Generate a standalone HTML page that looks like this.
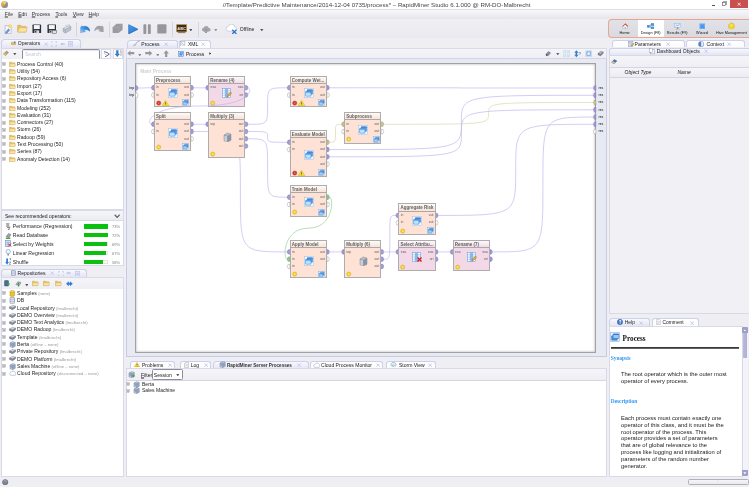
<!DOCTYPE html>
<html><head><meta charset="utf-8"><title>RapidMiner Studio</title>
<style>
*{box-sizing:border-box;margin:0;padding:0}
html,body{width:749px;height:487px;overflow:hidden;background:#eeeef3;font-family:"Liberation Sans",sans-serif;font-size:5.05px;color:#222;line-height:1}
.a{position:absolute}
.t{position:absolute;white-space:pre;line-height:1;filter:blur(0px)}
u{text-decoration-thickness:0.45px;text-underline-offset:0.35px}
.tab{position:absolute;border:0.6px solid #ccd0ea;border-bottom:none;border-radius:3px 3px 0 0;background:linear-gradient(#ffffff,#fbfbfe)}
.tab.sel{background:linear-gradient(#f8f8fd,#e4e5f2);border-radius:4px 3px 0 0}
.pane{position:absolute;border:0.6px solid #d9dae8;background:#fff}
.bar{position:absolute;background:linear-gradient(#f5f5f9,#eeeef4);border-bottom:0.5px solid #d0d0e0}
.row{position:absolute;left:0;height:7.3px;width:100%}
.plus{position:absolute;width:3.7px;height:3.7px;border:0.5px solid #b2b2ba;background:linear-gradient(#808088,#808088) center/2.1px 0.5px no-repeat,linear-gradient(#808088,#808088) center/0.5px 2.1px no-repeat,#fff}
.sm{font-size:4.2px;color:#9a9a9a}
.x{color:#b9c4e4;font-size:5px}
.op{position:absolute;filter:blur(0px);border:0.45px solid #adadad;width:37px;background:#fde2d5}
.op.pk{background:#f3d8e8}
.op .h{position:absolute;left:0;right:0;top:0;height:7.2px;background:linear-gradient(#fffaf6,#f6e2d8);border-bottom:0.5px solid #a9a9a9;font-weight:bold;font-size:4.45px;line-height:7px;padding-left:1.1px;white-space:pre;color:#606060;letter-spacing:0.04px}
.op.pk .h{background:linear-gradient(#fff8fc,#f0dbe8)}
.pl{position:absolute;font-size:3.35px;color:#5c5c5c;line-height:1}
#w{position:absolute;left:0;top:0;width:749px;height:487px;overflow:hidden;filter:blur(0.38px)}
</style></head><body><div id="w">

<div class="a" style="left:0;top:0;width:749px;height:9.2px;background:#fff"></div>
<svg class="a" style="left:0.8px;top:0.8px" width="7.4" height="7.4" viewBox="0 0 7 7"><circle cx="3.5" cy="3.5" r="3.3" fill="#8e9098"/><path d="M3.5 3.5L3.500.2A3.3 3.3 0 0 0 .9 5.6Z" fill="#f2a238"/><path d="M3.5 3.5L5.200.7A3.3 3.3 0 0 0 1.4 1Z" fill="#f8dc58"/><circle cx="3.5" cy="3.5" r="3.3" fill="none" stroke="#c8c8ce" stroke-width=".3"/></svg>
<div class="t" style="left:222.7px;top:5.3px;transform:translateY(-50%);font-size:6.17px;color:#444">//Template/Predictive Maintenance/2014-12-04 0735/process* – RapidMiner Studio 6.1.000 @ RM-DO-Malbrecht</div>
<div class="a" style="left:712px;top:4.5px;width:3.4px;height:1px;background:#555"></div>
<svg class="a" style="left:722px;top:1.4px" width="5" height="5" viewBox="0 0 5 5"><path d="M1.4 1.4V.4h3.2v3.2h-1" fill="none" stroke="#555" stroke-width=".6"/><rect x=".4" y="1.4" width="3.2" height="3.2" fill="#fff" stroke="#555" stroke-width=".6"/></svg>
<div class="a" style="left:730.2px;top:0;width:17.6px;height:7.6px;background:#c9504e"></div>
<svg class="a" style="left:736.8px;top:1.7px" width="4.4" height="4.4" viewBox="0 0 4.4 4.4"><path d="M.7 .7L3.7 3.7M3.7 .7L.7 3.7" stroke="#fff" stroke-width=".8"/></svg>
<div class="a" style="left:0;top:9px;width:749px;height:10.3px;background:linear-gradient(#f8f8fa,#e6e6eb);border-top:0.6px solid #dcdce2"></div>
<div class="t" style="left:4.8px;top:15.3px;transform:translateY(-50%);color:#333"><u>F</u>ile</div>
<div class="t" style="left:18.2px;top:15.3px;transform:translateY(-50%);color:#333"><u>E</u>dit</div>
<div class="t" style="left:31.8px;top:15.3px;transform:translateY(-50%);color:#333"><u>P</u>rocess</div>
<div class="t" style="left:55.4px;top:15.3px;transform:translateY(-50%);color:#333"><u>T</u>ools</div>
<div class="t" style="left:72.8px;top:15.3px;transform:translateY(-50%);color:#333"><u>V</u>iew</div>
<div class="t" style="left:88.6px;top:15.3px;transform:translateY(-50%);color:#333"><u>H</u>elp</div>
<div class="a" style="left:0;top:19.3px;width:749px;height:19px;background:linear-gradient(#efeff4,#e9e9ef)"></div>
<div class="a" style="left:75.6px;top:21.5px;width:0.6px;height:15px;background:#d6d6e2"></div>
<div class="a" style="left:109px;top:21.5px;width:0.6px;height:15px;background:#d6d6e2"></div>
<div class="a" style="left:172px;top:21.5px;width:0.6px;height:15px;background:#d6d6e2"></div>
<div class="a" style="left:197.5px;top:21.5px;width:0.6px;height:15px;background:#d6d6e2"></div>
<svg class="a" style="left:4.4px;top:23.6px" width="8.4" height="10.4" viewBox="0 0 8 9.6"><path d="M1 1.4h4.2l1.6 1.6v6H1z" fill="#f6f8fc" stroke="#9aa2b6" stroke-width=".5"/><path d="M1.6 7.4l2.6-3 1.4 1.2-2.6 3-1.700.4z" fill="#6a9ad8" stroke="#44699f" stroke-width=".3"/><circle cx="5.8" cy="2" r="1.7" fill="#f9cf45"/><circle cx="5.8" cy="2" r=".8" fill="#fdeea0"/></svg>
<svg class="a" style="left:17.2px;top:24.2px" width="10.8" height="9.2" viewBox="0 0 10 8.4"><path d="M.6 1.2h3l.8 1h4v5.2H.6z" fill="#e8c163" stroke="#c39a3e" stroke-width=".4"/><path d="M.6 7.4l1.6-4h7.4L8.2 7.4z" fill="#f9e3a0" stroke="#cfa84a" stroke-width=".4"/></svg>
<svg class="a" style="left:32px;top:24px" width="9.6" height="9.6" viewBox="0 0 8 8"><rect x=".4" y=".4" width="7.2" height="7.2" rx=".6" fill="#2c3038"/><rect x="1.5" y=".9" width="5" height="3.3" fill="#f4f6f9"/><rect x="2" y="5.3" width="4" height="2.3" fill="#d4d7de"/><rect x="2.6" y="5.7" width="1" height="1.5" fill="#2c3038"/></svg>
<svg class="a" style="left:46.7px;top:24px" width="9.6" height="9.6" viewBox="0 0 8 8"><rect x=".4" y=".4" width="7.2" height="7.2" rx=".6" fill="#2c3038"/><rect x="1.5" y=".9" width="5" height="3.3" fill="#f4f6f9"/><rect x="2" y="5.3" width="4" height="2.3" fill="#d4d7de"/><rect x="2.6" y="5.7" width="1" height="1.5" fill="#2c3038"/></svg>
<svg class="a" style="left:51.8px;top:29.8px" width="5" height="4.2" viewBox="0 0 5 4.2"><rect x=".3" y=".3" width="4.2" height="3.4" fill="#fff" stroke="#444" stroke-width=".5"/><path d="M1 1.4h2.8M1 2.4h2.8" stroke="#888" stroke-width=".3"/></svg>
<svg class="a" style="left:61.5px;top:23.8px" width="10" height="10" viewBox="0 0 9 9"><path d="M1 4l5-2.5 2 .8-5 2.6z" fill="#e6e9ef" stroke="#8a93a2" stroke-width=".4"/><path d="M1 4v3l2 1.2 5-2.8V2.3L3 4.9z" fill="#bcc3cf" stroke="#8a93a2" stroke-width=".4"/><path d="M3.2 1.6l3.2-1 .8.600-3.4 1.3z" fill="#fff" stroke="#8a93a2" stroke-width=".3"/><path d="M3 4.9V8.2" stroke="#8a93a2" stroke-width=".4"/></svg>
<svg class="a" style="left:79.7px;top:24.6px" width="10.6" height="8.2" viewBox="0 0 10 8"><defs><linearGradient id="ug" x1="0" y1="1" x2="1" y2="0"><stop offset="0" stop-color="#9fd0fa"/><stop offset=".6" stop-color="#2f86dc"/><stop offset="1" stop-color="#1f6cc4"/></linearGradient></defs><path d="M.4 2.4L.4 7.6L5.2 6.4L3.8 5.2C5.2 4.2 7.4 4.4 9.6 6.2C9.6 2.6 6 0 2.6 1.6L1.600.8Z" fill="url(#ug)" stroke="#2a70c0" stroke-width=".3"/></svg>
<svg class="a" style="left:94.3px;top:24.9px" width="10" height="7.6" viewBox="0 0 10 8"><path d="M9.6 2.4L9.6 7.6L4.8 6.4L6.2 5.2C4.8 4.2 2.6 4.400.4 6.2C.4 2.6 4 0 7.4 1.6L8.400.8Z" fill="#a2a2a6" stroke="#8e8e92" stroke-width=".3"/></svg>
<svg class="a" style="left:112.2px;top:22.8px" width="11.4" height="10.8" viewBox="0 0 11.4 10.8"><path d="M.6 4.2L4.600.8h6v6L6.6 10H.6z" fill="#9a9aa0"/><path d="M.6 4.2h6L10.600.8M6.6 4.2V10" stroke="#b0b0b6" stroke-width=".5" fill="none"/></svg>
<svg class="a" style="left:128.4px;top:23.5px" width="11" height="10.6" viewBox="0 0 11 10.6"><defs><linearGradient id="pg" x1="0" y1="0" x2="1" y2="1"><stop offset="0" stop-color="#4aa0ee"/><stop offset="1" stop-color="#1f6fd0"/></linearGradient></defs><path d="M.7.7L10 5.300.7 9.9z" fill="url(#pg)" stroke="#1d5fa8" stroke-width=".6" stroke-linejoin="round"/></svg>
<svg class="a" style="left:143px;top:23.7px" width="8.4" height="10.2" viewBox="0 0 8.4 10.2"><rect x=".4" y=".3" width="2.9" height="9.6" rx=".6" fill="#96969c"/><rect x="4.9" y=".3" width="2.9" height="9.6" rx=".6" fill="#96969c"/></svg>
<svg class="a" style="left:157px;top:24px" width="9.8" height="9.8" viewBox="0 0 9.8 9.8"><rect x=".3" y=".3" width="9.2" height="9.2" rx=".9" fill="#96969c"/></svg>
<svg class="a" style="left:175.8px;top:24.2px" width="11.4" height="9.6" viewBox="0 0 11.4 9.6"><rect x=".5" y=".5" width="10.2" height="7.4" rx=".5" fill="#3a2c22" stroke="#c89a3a" stroke-width=".8"/><text x="5.6" y="5.8" font-size="4" font-weight="bold" fill="#e8e0d0" text-anchor="middle" font-family="Liberation Sans,sans-serif">ABC</text><rect x="2" y="8.2" width="7.2" height=".9" fill="#8a6a3a"/></svg>
<svg class="a" style="left:188.6px;top:29.2px" width="3.6" height="2.2" viewBox="0 0 3.6 2.2"><path d="M.2.2h3.2L1.8 2z" fill="#222"/></svg>
<svg class="a" style="left:200.5px;top:24.6px" width="10" height="8.4" viewBox="0 0 10 8.4"><path d="M2.4 6.6a2 2 0 0 1 .2-3.9A2.8 2.8 0 0 1 7.8 3a1.8 1.8 0 0 1 .2 3.6z" fill="#a4a4aa"/><path d="M5 4v3.6M3.6 6.4L5 8l1.4-1.6" stroke="#8a8a90" stroke-width=".9" fill="none"/></svg>
<svg class="a" style="left:213.6px;top:29.2px" width="3.6" height="2.2" viewBox="0 0 3.6 2.2"><path d="M.2.2h3.2L1.8 2z" fill="#777"/></svg>
<svg class="a" style="left:224.8px;top:23.8px" width="14" height="10.6" viewBox="0 0 14 10.6"><path d="M3 7.2a2.5 2.5 0 0 1 .3-4.9A3.4 3.4 0 0 1 9.8 2.9a2.3 2.3 0 0 1 .3 4.3z" fill="#fff" stroke="#b4bcd0" stroke-width=".6"/><path d="M7.2 5.8l4.2 4.2M11.4 5.8L7.2 10" stroke="#2f74cc" stroke-width="1.3"/></svg>
<div class="t" style="left:239.8px;top:29.7px;transform:translateY(-50%);color:#222">Offline</div>
<svg class="a" style="left:260.3px;top:29.2px" width="3.6" height="2.2" viewBox="0 0 3.6 2.2"><path d="M.2.2h3.2L1.8 2z" fill="#222"/></svg>
<div class="a" style="left:608.2px;top:19.2px;width:142px;height:18.6px;border:0.7px solid #e8a68c;border-right:none;border-radius:4px 0 0 4px;background:linear-gradient(#e2e2e8,#d9d9e0)"></div>
<div class="a" style="left:638px;top:19.9px;width:26px;height:17.2px;background:#fff"></div>
<div class="t" style="left:624.6px;top:33.5px;transform:translate(-50%,-50%);font-size:3.8px;color:#111">Home</div>
<div class="t" style="left:650.7px;top:33.5px;transform:translate(-50%,-50%);font-size:3.8px;color:#111">Design (F8)</div>
<div class="t" style="left:677.2px;top:33.5px;transform:translate(-50%,-50%);font-size:3.8px;color:#111">Results (F9)</div>
<div class="t" style="left:702px;top:33.5px;transform:translate(-50%,-50%);font-size:3.8px;color:#111">Wizard</div>
<div class="t" style="left:731.4px;top:33.5px;transform:translate(-50%,-50%);font-size:3.8px;color:#111">Hive Management</div>
<svg class="a" style="left:621.6px;top:22.8px" width="6.4" height="6.2" viewBox="0 0 6.4 6.2"><path d="M.9 3.2L3.200.9l2.3 2.3v2.6H.9z" fill="#f6f4f2" stroke="#a89a94" stroke-width=".35"/><path d="M.3 3.3L3.200.5l2.9 2.8-.6.500L3.2 1.600.9 3.8z" fill="#c8483a"/><path d="M3.200.5l2.9 2.8" stroke="#9a2c20" stroke-width=".4"/><rect x="2.6" y="4" width="1.2" height="1.8" fill="#b8aaa2"/></svg>
<svg class="a" style="left:646.8px;top:22.6px" width="7.6" height="6.6" viewBox="0 0 7.6 6.6"><rect x=".3" y="2.3" width="2.4" height="2.1" fill="#3f8fdc" stroke="#2a6ab8" stroke-width=".3"/><rect x="4.2" y=".4" width="3" height="2.3" fill="#4a98e2" stroke="#2a6ab8" stroke-width=".3"/><rect x="4.2" y="3.9" width="3" height="2.3" fill="#4a98e2" stroke="#2a6ab8" stroke-width=".3"/><path d="M2.7 3.35h.8V1.55h.7M3.5 3.35v1.7h.7" stroke="#2a62a4" stroke-width=".4" fill="none"/></svg>
<svg class="a" style="left:673.6px;top:22.5px" width="7.4" height="7" viewBox="0 0 7.4 7"><rect x=".4" y=".4" width="6.4" height="4" fill="#e6f0fb" stroke="#7aa8dc" stroke-width=".4"/><path d="M1.3 3.3l1.4-1.4 1.200.8 1.9-1.7" stroke="#3a82d0" stroke-width=".5" fill="none"/><path d="M3.6 4.4L2.1 6.8M3.6 4.4l1.5 2.4M3.6 4.4v1.9" stroke="#6a7280" stroke-width=".4"/></svg>
<svg class="a" style="left:698.7px;top:22.5px" width="6.7" height="6.7" viewBox="0 0 6.7 6.7"><rect x=".3" y=".3" width="6.1" height="6.1" fill="#6ab0f2" stroke="#a8d0f6" stroke-width=".5"/><rect x="1.6" y="1.6" width="3.5" height="3.5" fill="#4a98e6"/></svg>
<svg class="a" style="left:728px;top:22.4px" width="7" height="7" viewBox="0 0 7 7"><path d="M2.2 1.3l1.2-.8 1 .9 1.300.1.200 1.3 1 .9-.8 1.100.1 1.3-1.300.3-.7 1.1-1.2-.6-1.200.4-.5-1.2L.2 5.4l.5-1.2L.3 2.9l1.2-.5z" fill="#f4d628" stroke="#c4a410" stroke-width=".35"/><circle cx="3.3" cy="3.3" r="1" fill="#fbea7a"/></svg>
<div class="tab sel" style="left:1.4px;top:39.2px;width:79.5px;height:8.6px"></div>
<svg class="a" style="left:10.5px;top:40.8px" width="5" height="4.5" viewBox="0 0 5 4.5"><path d="M.3 1.2h1.6l.5.600h2.3v2.5H.3z" fill="#e8b84a" stroke="#b88a2a" stroke-width=".3"/><circle cx="3.7" cy="1.2" r="1" fill="#4c8ddc"/></svg>
<div class="t" style="left:17.8px;top:44.3px;transform:translateY(-50%);color:#222">Operators</div>
<svg class="a" style="left:43.8px;top:41.8px" width="4.4" height="4.4" viewBox="0 0 4.4 4.4"><path d="M.5.5L3.9 3.9M3.900.5L.5 3.9" stroke="#bfc8ea" stroke-width=".9"/></svg>
<svg class="a" style="left:51.4px;top:41.2px" width="6" height="5.6" viewBox="0 0 6 5.6"><path d="M.4 1.8V.4h1.5M4.100.4h1.5v1.4M5.6 3.8v1.4H4.1M1.9 5.2H.4V3.8" stroke="#bfc8ea" stroke-width=".8" fill="none"/></svg>
<svg class="a" style="left:59.9px;top:42px" width="5" height="4" viewBox="0 0 5 4"><path d="M.3 2L2.300.3v1h2.4v1.4H2.3v1z" fill="#bfc8ea"/></svg>
<svg class="a" style="left:68px;top:41.2px" width="5.2" height="5.6" viewBox="0 0 5.2 5.6"><rect x=".5" y=".5" width="4.2" height="4.6" fill="none" stroke="#bfc8ea" stroke-width=".8"/><rect x="1.6" y="1.6" width="2" height="2.4" fill="#bfc8ea"/></svg>
<div class="bar" style="left:0.5px;top:47.6px;width:123.3px;height:11.4px;border:0.6px solid #d9dae8;border-bottom:none"></div>
<svg class="a" style="left:3px;top:50.3px" width="6" height="6" viewBox="0 0 6 6"><path d="M.5 4l3-3 2 1.6-3 3z" fill="#b9a37a" stroke="#6a6250" stroke-width=".4"/><path d="M.5 4l1.1-1.1 2 1.6-1.1 1.1z" fill="#e6c050"/></svg>
<svg class="a" style="left:13.1px;top:52.9px" width="3.6" height="2.2" viewBox="0 0 3.6 2.2"><path d="M.2.2h3.2L1.8 2z" fill="#222"/></svg>
<div class="a" style="left:22.4px;top:48.5px;width:77.6px;height:11px;border:0.7px solid #8d8d99;border-radius:1.5px;background:#fff;box-shadow:inset 0 .5px .8px #ccc"></div>
<div class="t" style="left:25px;top:54.7px;transform:translateY(-50%);color:#c4c8d8">Search</div>
<div class="a" style="left:101.2px;top:49.2px;width:10px;height:9.6px;background:#fff;border:0.4px solid #dadae6"></div>
<div class="a" style="left:112.5px;top:49.2px;width:10.5px;height:9.6px;background:#fff;border:0.4px solid #dadae6"></div>
<svg class="a" style="left:103px;top:50.8px" width="7" height="6.5" viewBox="0 0 7 6.5"><path d="M1 .8C3 .8 5 1.8 6.3 3.2L2 6" stroke="#3d4f7a" stroke-width=".9" fill="none"/><path d="M1.5 2.5L3.5 4" stroke="#7b8fc0" stroke-width=".6"/></svg>
<svg class="a" style="left:114.5px;top:50.3px" width="7.5" height="7.5" viewBox="0 0 7.5 7.5"><path d="M1.300.5h2v3.5h1.2L2.3 6.800.1 4h1.2z" fill="#2f7fd6" stroke="#1d5aa0" stroke-width=".3"/><path d="M5 1.5l1-.9v5.4" stroke="#777" stroke-width=".6" fill="none"/></svg>
<div class="pane" style="left:0.5px;top:59px;width:123.3px;height:151px;border-top:none"></div>
<svg class="a" style="left:2px;top:62.2px" width="4" height="4" viewBox="0 0 4 4"><rect x=".3" y=".3" width="3.4" height="3.4" fill="#fff" stroke="#a2a2aa" stroke-width=".5"/><path d="M1 2h2M2 1v2" stroke="#66666e" stroke-width=".55"/></svg>
<svg class="a" style="left:8.8px;top:60.8px" width="7" height="6.5" viewBox="0 0 7 6.5"><path d="M.4 1.1h2l.5.700h3v3.8H.4z" fill="#e9c76c" stroke="#c6a04a" stroke-width=".35"/><path d="M.4 5.6l.8-2.7h5.3l-.6 2.7z" fill="#f9e6a6" stroke="#d2ae58" stroke-width=".35"/></svg>
<div class="t" style="left:17.1px;top:64.8px;transform:translateY(-50%);color:#1e1e1e">Process Control (40)</div>
<svg class="a" style="left:2px;top:69.49px" width="4" height="4" viewBox="0 0 4 4"><rect x=".3" y=".3" width="3.4" height="3.4" fill="#fff" stroke="#a2a2aa" stroke-width=".5"/><path d="M1 2h2M2 1v2" stroke="#66666e" stroke-width=".55"/></svg>
<svg class="a" style="left:8.8px;top:68.09px" width="7" height="6.5" viewBox="0 0 7 6.5"><path d="M.4 1.1h2l.5.700h3v3.8H.4z" fill="#e9c76c" stroke="#c6a04a" stroke-width=".35"/><path d="M.4 5.6l.8-2.7h5.3l-.6 2.7z" fill="#f9e6a6" stroke="#d2ae58" stroke-width=".35"/></svg>
<div class="t" style="left:17.1px;top:72.09px;transform:translateY(-50%);color:#1e1e1e">Utility (54)</div>
<svg class="a" style="left:2px;top:76.78px" width="4" height="4" viewBox="0 0 4 4"><rect x=".3" y=".3" width="3.4" height="3.4" fill="#fff" stroke="#a2a2aa" stroke-width=".5"/><path d="M1 2h2M2 1v2" stroke="#66666e" stroke-width=".55"/></svg>
<svg class="a" style="left:8.8px;top:75.38px" width="7" height="6.5" viewBox="0 0 7 6.5"><path d="M.4 1.1h2l.5.700h3v3.8H.4z" fill="#e9c76c" stroke="#c6a04a" stroke-width=".35"/><path d="M.4 5.6l.8-2.7h5.3l-.6 2.7z" fill="#f9e6a6" stroke="#d2ae58" stroke-width=".35"/></svg>
<div class="t" style="left:17.1px;top:79.38px;transform:translateY(-50%);color:#1e1e1e">Repository Access (6)</div>
<svg class="a" style="left:2px;top:84.07px" width="4" height="4" viewBox="0 0 4 4"><rect x=".3" y=".3" width="3.4" height="3.4" fill="#fff" stroke="#a2a2aa" stroke-width=".5"/><path d="M1 2h2M2 1v2" stroke="#66666e" stroke-width=".55"/></svg>
<svg class="a" style="left:8.8px;top:82.67px" width="7" height="6.5" viewBox="0 0 7 6.5"><path d="M.4 1.1h2l.5.700h3v3.8H.4z" fill="#e9c76c" stroke="#c6a04a" stroke-width=".35"/><path d="M.4 5.6l.8-2.7h5.3l-.6 2.7z" fill="#f9e6a6" stroke="#d2ae58" stroke-width=".35"/></svg>
<div class="t" style="left:17.1px;top:86.67px;transform:translateY(-50%);color:#1e1e1e">Import (27)</div>
<svg class="a" style="left:2px;top:91.36px" width="4" height="4" viewBox="0 0 4 4"><rect x=".3" y=".3" width="3.4" height="3.4" fill="#fff" stroke="#a2a2aa" stroke-width=".5"/><path d="M1 2h2M2 1v2" stroke="#66666e" stroke-width=".55"/></svg>
<svg class="a" style="left:8.8px;top:89.96px" width="7" height="6.5" viewBox="0 0 7 6.5"><path d="M.4 1.1h2l.5.700h3v3.8H.4z" fill="#e9c76c" stroke="#c6a04a" stroke-width=".35"/><path d="M.4 5.6l.8-2.7h5.3l-.6 2.7z" fill="#f9e6a6" stroke="#d2ae58" stroke-width=".35"/></svg>
<div class="t" style="left:17.1px;top:93.96px;transform:translateY(-50%);color:#1e1e1e">Export (17)</div>
<svg class="a" style="left:2px;top:98.65px" width="4" height="4" viewBox="0 0 4 4"><rect x=".3" y=".3" width="3.4" height="3.4" fill="#fff" stroke="#a2a2aa" stroke-width=".5"/><path d="M1 2h2M2 1v2" stroke="#66666e" stroke-width=".55"/></svg>
<svg class="a" style="left:8.8px;top:97.25px" width="7" height="6.5" viewBox="0 0 7 6.5"><path d="M.4 1.1h2l.5.700h3v3.8H.4z" fill="#e9c76c" stroke="#c6a04a" stroke-width=".35"/><path d="M.4 5.6l.8-2.7h5.3l-.6 2.7z" fill="#f9e6a6" stroke="#d2ae58" stroke-width=".35"/></svg>
<div class="t" style="left:17.1px;top:101.25px;transform:translateY(-50%);color:#1e1e1e">Data Transformation (115)</div>
<svg class="a" style="left:2px;top:105.94px" width="4" height="4" viewBox="0 0 4 4"><rect x=".3" y=".3" width="3.4" height="3.4" fill="#fff" stroke="#a2a2aa" stroke-width=".5"/><path d="M1 2h2M2 1v2" stroke="#66666e" stroke-width=".55"/></svg>
<svg class="a" style="left:8.8px;top:104.54px" width="7" height="6.5" viewBox="0 0 7 6.5"><path d="M.4 1.1h2l.5.700h3v3.8H.4z" fill="#e9c76c" stroke="#c6a04a" stroke-width=".35"/><path d="M.4 5.6l.8-2.7h5.3l-.6 2.7z" fill="#f9e6a6" stroke="#d2ae58" stroke-width=".35"/></svg>
<div class="t" style="left:17.1px;top:108.54px;transform:translateY(-50%);color:#1e1e1e">Modeling (252)</div>
<svg class="a" style="left:2px;top:113.23px" width="4" height="4" viewBox="0 0 4 4"><rect x=".3" y=".3" width="3.4" height="3.4" fill="#fff" stroke="#a2a2aa" stroke-width=".5"/><path d="M1 2h2M2 1v2" stroke="#66666e" stroke-width=".55"/></svg>
<svg class="a" style="left:8.8px;top:111.83px" width="7" height="6.5" viewBox="0 0 7 6.5"><path d="M.4 1.1h2l.5.700h3v3.8H.4z" fill="#e9c76c" stroke="#c6a04a" stroke-width=".35"/><path d="M.4 5.6l.8-2.7h5.3l-.6 2.7z" fill="#f9e6a6" stroke="#d2ae58" stroke-width=".35"/></svg>
<div class="t" style="left:17.1px;top:115.83px;transform:translateY(-50%);color:#1e1e1e">Evaluation (31)</div>
<svg class="a" style="left:2px;top:120.52px" width="4" height="4" viewBox="0 0 4 4"><rect x=".3" y=".3" width="3.4" height="3.4" fill="#fff" stroke="#a2a2aa" stroke-width=".5"/><path d="M1 2h2M2 1v2" stroke="#66666e" stroke-width=".55"/></svg>
<svg class="a" style="left:8.8px;top:119.12px" width="7" height="6.5" viewBox="0 0 7 6.5"><path d="M.4 1.1h2l.5.700h3v3.8H.4z" fill="#e9c76c" stroke="#c6a04a" stroke-width=".35"/><path d="M.4 5.6l.8-2.7h5.3l-.6 2.7z" fill="#f9e6a6" stroke="#d2ae58" stroke-width=".35"/></svg>
<div class="t" style="left:17.1px;top:123.12px;transform:translateY(-50%);color:#1e1e1e">Connectors (27)</div>
<svg class="a" style="left:2px;top:127.81px" width="4" height="4" viewBox="0 0 4 4"><rect x=".3" y=".3" width="3.4" height="3.4" fill="#fff" stroke="#a2a2aa" stroke-width=".5"/><path d="M1 2h2M2 1v2" stroke="#66666e" stroke-width=".55"/></svg>
<svg class="a" style="left:8.8px;top:126.41px" width="7" height="6.5" viewBox="0 0 7 6.5"><path d="M.4 1.1h2l.5.700h3v3.8H.4z" fill="#e9c76c" stroke="#c6a04a" stroke-width=".35"/><path d="M.4 5.6l.8-2.7h5.3l-.6 2.7z" fill="#f9e6a6" stroke="#d2ae58" stroke-width=".35"/></svg>
<div class="t" style="left:17.1px;top:130.41px;transform:translateY(-50%);color:#1e1e1e">Storm (26)</div>
<svg class="a" style="left:2px;top:135.1px" width="4" height="4" viewBox="0 0 4 4"><rect x=".3" y=".3" width="3.4" height="3.4" fill="#fff" stroke="#a2a2aa" stroke-width=".5"/><path d="M1 2h2M2 1v2" stroke="#66666e" stroke-width=".55"/></svg>
<svg class="a" style="left:8.8px;top:133.7px" width="7" height="6.5" viewBox="0 0 7 6.5"><path d="M.4 1.1h2l.5.700h3v3.8H.4z" fill="#e9c76c" stroke="#c6a04a" stroke-width=".35"/><path d="M.4 5.6l.8-2.7h5.3l-.6 2.7z" fill="#f9e6a6" stroke="#d2ae58" stroke-width=".35"/></svg>
<div class="t" style="left:17.1px;top:137.7px;transform:translateY(-50%);color:#1e1e1e">Radoop (59)</div>
<svg class="a" style="left:2px;top:142.39px" width="4" height="4" viewBox="0 0 4 4"><rect x=".3" y=".3" width="3.4" height="3.4" fill="#fff" stroke="#a2a2aa" stroke-width=".5"/><path d="M1 2h2M2 1v2" stroke="#66666e" stroke-width=".55"/></svg>
<svg class="a" style="left:8.8px;top:140.99px" width="7" height="6.5" viewBox="0 0 7 6.5"><path d="M.4 1.1h2l.5.700h3v3.8H.4z" fill="#e9c76c" stroke="#c6a04a" stroke-width=".35"/><path d="M.4 5.6l.8-2.7h5.3l-.6 2.7z" fill="#f9e6a6" stroke="#d2ae58" stroke-width=".35"/></svg>
<div class="t" style="left:17.1px;top:144.99px;transform:translateY(-50%);color:#1e1e1e">Text Processing (50)</div>
<svg class="a" style="left:2px;top:149.68px" width="4" height="4" viewBox="0 0 4 4"><rect x=".3" y=".3" width="3.4" height="3.4" fill="#fff" stroke="#a2a2aa" stroke-width=".5"/><path d="M1 2h2M2 1v2" stroke="#66666e" stroke-width=".55"/></svg>
<svg class="a" style="left:8.8px;top:148.28px" width="7" height="6.5" viewBox="0 0 7 6.5"><path d="M.4 1.1h2l.5.700h3v3.8H.4z" fill="#e9c76c" stroke="#c6a04a" stroke-width=".35"/><path d="M.4 5.6l.8-2.7h5.3l-.6 2.7z" fill="#f9e6a6" stroke="#d2ae58" stroke-width=".35"/></svg>
<div class="t" style="left:17.1px;top:152.28px;transform:translateY(-50%);color:#1e1e1e">Series (87)</div>
<svg class="a" style="left:2px;top:156.97px" width="4" height="4" viewBox="0 0 4 4"><rect x=".3" y=".3" width="3.4" height="3.4" fill="#fff" stroke="#a2a2aa" stroke-width=".5"/><path d="M1 2h2M2 1v2" stroke="#66666e" stroke-width=".55"/></svg>
<svg class="a" style="left:8.8px;top:155.57px" width="7" height="6.5" viewBox="0 0 7 6.5"><path d="M.4 1.1h2l.5.700h3v3.8H.4z" fill="#e9c76c" stroke="#c6a04a" stroke-width=".35"/><path d="M.4 5.6l.8-2.7h5.3l-.6 2.7z" fill="#f9e6a6" stroke="#d2ae58" stroke-width=".35"/></svg>
<div class="t" style="left:17.1px;top:159.57px;transform:translateY(-50%);color:#1e1e1e">Anomaly Detection (14)</div>
<div class="a" style="left:0.5px;top:210px;width:123.3px;height:11px;background:linear-gradient(#f5f5f9,#ececf2);border:0.6px solid #d9dae8"></div>
<div class="t" style="left:5px;top:216.5px;transform:translateY(-50%);color:#222">See recommended operators:</div>
<svg class="a" style="left:113.8px;top:213.6px" width="6.4" height="4.4" viewBox="0 0 6.4 4.4"><path d="M.7.7L3.2 3.4 5.700.7" stroke="#686868" stroke-width="1.3" fill="none"/></svg>
<div class="pane" style="left:0.5px;top:221px;width:123.3px;height:45px;border-top:none"></div>
<svg class="a" style="left:5px;top:222.7px" width="7" height="7.2" viewBox="0 0 7 7.2"><path d="M1 .8h3.5M1.5 2h2.5M1 3.2h3.5M2 4.5h3l-2 2.5h2" stroke="#555" stroke-width=".7" fill="none"/></svg>
<div class="t" style="left:12.8px;top:227px;transform:translateY(-50%);color:#1e1e1e;font-size:5.1px">Performance (Regression)</div>
<div class="a" style="left:83.6px;top:224px;width:24.7px;height:4.6px;background:#fff;border:0.3px solid #e4e4e4"></div>
<div class="a" style="left:83.6px;top:224px;width:24.5px;height:4.6px;background:#0cc010"></div>
<div class="t" style="left:112px;top:227px;transform:translateY(-50%);font-size:4px;color:#7c7c7c">73%</div>
<svg class="a" style="left:5px;top:231.58px" width="7" height="7.2" viewBox="0 0 7 7.2"><path d="M1 4.5l2.5-3 2.5 1-2 3.3z" fill="#9aa4b4" stroke="#556" stroke-width=".4"/><path d="M.8 5.5h4.5v1.5H.8z" fill="#5aa040"/></svg>
<div class="t" style="left:12.8px;top:235.88px;transform:translateY(-50%);color:#1e1e1e;font-size:5.1px">Read Database</div>
<div class="a" style="left:83.6px;top:232.88px;width:24.7px;height:4.6px;background:#fff;border:0.3px solid #e4e4e4"></div>
<div class="a" style="left:83.6px;top:232.88px;width:24.2px;height:4.6px;background:#0cc010"></div>
<div class="t" style="left:112px;top:235.88px;transform:translateY(-50%);font-size:4px;color:#7c7c7c">72%</div>
<svg class="a" style="left:5px;top:240.46px" width="7" height="7.2" viewBox="0 0 7 7.2"><rect x=".5" y=".5" width="5" height="6" fill="#e8f0fb" stroke="#4a7ec8" stroke-width=".5"/><path d="M2.200.5v6M3.800.5v6M.5 2.5h5M.5 4.5h5" stroke="#4a7ec8" stroke-width=".3"/><path d="M3.2 3.5l3 3M6.2 3.5l-3 3" stroke="#d02020" stroke-width=".9"/></svg>
<div class="t" style="left:12.8px;top:244.76px;transform:translateY(-50%);color:#1e1e1e;font-size:5.1px">Select by Weights</div>
<div class="a" style="left:83.6px;top:241.76px;width:24.7px;height:4.6px;background:#fff;border:0.3px solid #e4e4e4"></div>
<div class="a" style="left:83.6px;top:241.76px;width:23.3px;height:4.6px;background:#0cc010"></div>
<div class="t" style="left:112px;top:244.76px;transform:translateY(-50%);font-size:4px;color:#7c7c7c">69%</div>
<svg class="a" style="left:5px;top:249.34px" width="7" height="7.2" viewBox="0 0 7 7.2"><circle cx="3.2" cy="2.6" r="2.2" fill="#f2f6fc" stroke="#5a86c8" stroke-width=".5"/><path d="M2.4 4.8h1.6v1.8H2.4z" fill="#8892a6"/></svg>
<div class="t" style="left:12.8px;top:253.64px;transform:translateY(-50%);color:#1e1e1e;font-size:5.1px">Linear Regression</div>
<div class="a" style="left:83.6px;top:250.64px;width:24.7px;height:4.6px;background:#fff;border:0.3px solid #e4e4e4"></div>
<div class="a" style="left:83.6px;top:250.64px;width:22.5px;height:4.6px;background:#0cc010"></div>
<div class="t" style="left:112px;top:253.64px;transform:translateY(-50%);font-size:4px;color:#7c7c7c">67%</div>
<svg class="a" style="left:5px;top:258.22px" width="7" height="7.2" viewBox="0 0 7 7.2"><path d="M1.200.5h1.8v3.5h1L2.1 6.800.2 4h1z" fill="#2f7fd6"/><path d="M4.5 1l1-.7v2M4.3 4h1.4l-1.4 2.5h1.5" stroke="#444" stroke-width=".5" fill="none"/></svg>
<div class="t" style="left:12.8px;top:262.52px;transform:translateY(-50%);color:#1e1e1e;font-size:5.1px">Shuffle</div>
<div class="a" style="left:83.6px;top:259.52px;width:24.7px;height:4.6px;background:#fff;border:0.3px solid #e4e4e4"></div>
<div class="a" style="left:83.6px;top:259.52px;width:19.5px;height:4.6px;background:#0cc010"></div>
<div class="t" style="left:112px;top:262.52px;transform:translateY(-50%);font-size:4px;color:#7c7c7c">58%</div>
<div class="tab sel" style="left:1.4px;top:268.6px;width:86px;height:8.6px"></div>
<svg class="a" style="left:10.5px;top:269.8px" width="5" height="6" viewBox="0 0 5 6"><rect x=".4" y=".4" width="4" height="5.2" rx=".6" fill="#e8ecf4" stroke="#67759a" stroke-width=".5"/><path d="M.4 2h4M.4 3.8h4" stroke="#67759a" stroke-width=".4"/></svg>
<div class="t" style="left:17.6px;top:273.8px;transform:translateY(-50%);color:#222">Repositories</div>
<svg class="a" style="left:50.3px;top:271.1px" width="4.4" height="4.4" viewBox="0 0 4.4 4.4"><path d="M.5.5L3.9 3.9M3.900.5L.5 3.9" stroke="#bfc8ea" stroke-width=".9"/></svg>
<svg class="a" style="left:57.9px;top:270.5px" width="6" height="5.6" viewBox="0 0 6 5.6"><path d="M.4 1.8V.4h1.5M4.100.4h1.5v1.4M5.6 3.8v1.4H4.1M1.9 5.2H.4V3.8" stroke="#bfc8ea" stroke-width=".8" fill="none"/></svg>
<svg class="a" style="left:66.4px;top:271.3px" width="5" height="4" viewBox="0 0 5 4"><path d="M.3 2L2.300.3v1h2.4v1.4H2.3v1z" fill="#bfc8ea"/></svg>
<svg class="a" style="left:74.5px;top:270.5px" width="5.2" height="5.6" viewBox="0 0 5.2 5.6"><rect x=".5" y=".5" width="4.2" height="4.6" fill="none" stroke="#bfc8ea" stroke-width=".8"/><rect x="1.6" y="1.6" width="2" height="2.4" fill="#bfc8ea"/></svg>
<div class="bar" style="left:0.5px;top:277px;width:123.3px;height:12px;border:0.6px solid #d9dae8;border-bottom:none"></div>
<svg class="a" style="left:3.5px;top:280px" width="6.5" height="7" viewBox="0 0 6.5 7"><rect x=".5" y=".5" width="4" height="5.5" rx=".5" fill="#4a6a9a" stroke="#2c4068" stroke-width=".4"/><path d="M3 4h3M4.5 2.6v3" stroke="#38b038" stroke-width="1.1"/></svg>
<svg class="a" style="left:14.5px;top:280px" width="7" height="7" viewBox="0 0 7 7"><path d="M.8 4.5l2.2-2.8 3 .8-1.8 3z" fill="#aab0bc" stroke="#505868" stroke-width=".4"/><path d="M3.5 3v3.5" stroke="#38a038" stroke-width="1.2"/></svg>
<svg class="a" style="left:24.6px;top:283.5px" width="3.6" height="2.2" viewBox="0 0 3.6 2.2"><path d="M.2.2h3.2L1.8 2z" fill="#222"/></svg>
<svg class="a" style="left:31.5px;top:280.3px" width="7.5" height="6.5" viewBox="0 0 7.5 6.5"><path d="M.4 1.1h2l.5.700h3v3.8H.4z" fill="#e9c76c" stroke="#c6a04a" stroke-width=".35"/><path d="M.4 5.6l.8-2.7h5.3l-.6 2.7z" fill="#f9e6a6" stroke="#d2ae58" stroke-width=".35"/></svg>
<svg class="a" style="left:43px;top:280.3px" width="7.5" height="6.5" viewBox="0 0 7.5 6.5"><path d="M.4 1.1h2l.5.700h3v3.8H.4z" fill="#e9c76c" stroke="#c6a04a" stroke-width=".35"/><path d="M.4 5.6l.8-2.7h5.3l-.6 2.7z" fill="#f9e6a6" stroke="#d2ae58" stroke-width=".35"/></svg>
<svg class="a" style="left:54.5px;top:280.3px" width="7.5" height="6.5" viewBox="0 0 7.5 6.5"><path d="M.4 1.1h2l.5.700h3v3.8H.4z" fill="#e9c76c" stroke="#c6a04a" stroke-width=".35"/><path d="M.4 5.6l.8-2.7h5.3l-.6 2.7z" fill="#f9e6a6" stroke="#d2ae58" stroke-width=".35"/></svg>
<svg class="a" style="left:66px;top:280.6px" width="6.8" height="5.4" viewBox="0 0 6.8 5.4"><path d="M0 2.7L2.800.2V1.7H4V.2L6.8 2.7 4 5.2V3.7H2.8V5.2z" fill="#2f7fd6"/></svg>
<div class="pane" style="left:0.5px;top:289px;width:123.3px;height:188.3px;border-top:none"></div>
<svg class="a" style="left:2px;top:291.3px" width="4" height="4" viewBox="0 0 4 4"><rect x=".3" y=".3" width="3.4" height="3.4" fill="#fff" stroke="#a2a2aa" stroke-width=".5"/><path d="M1 2h2M2 1v2" stroke="#66666e" stroke-width=".55"/></svg>
<svg class="a" style="left:8.8px;top:289.7px" width="7" height="7" viewBox="0 0 7 7"><path d="M1 1.5v4a2.3 .9 0 0 0 4.6 0v-4" fill="#efc326" stroke="#9a7a10" stroke-width=".4"/><ellipse cx="3.3" cy="1.5" rx="2.3" ry=".9" fill="#fbe27a" stroke="#9a7a10" stroke-width=".4"/></svg>
<div class="t" style="left:17.1px;top:293.9px;transform:translateY(-50%);color:#1e1e1e">Samples <span class="sm">(none)</span></div>
<svg class="a" style="left:2px;top:298.6px" width="4" height="4" viewBox="0 0 4 4"><rect x=".3" y=".3" width="3.4" height="3.4" fill="#fff" stroke="#a2a2aa" stroke-width=".5"/><path d="M1 2h2M2 1v2" stroke="#66666e" stroke-width=".55"/></svg>
<svg class="a" style="left:8.8px;top:297px" width="7" height="7" viewBox="0 0 7 7"><rect x="1" y=".5" width="4.5" height="5.8" rx=".5" fill="#e8ecf4" stroke="#67759a" stroke-width=".5"/><path d="M1 2.3h4.5M1 4.3h4.5" stroke="#67759a" stroke-width=".4"/></svg>
<div class="t" style="left:17.1px;top:301.2px;transform:translateY(-50%);color:#1e1e1e">DB</div>
<svg class="a" style="left:2px;top:305.9px" width="4" height="4" viewBox="0 0 4 4"><rect x=".3" y=".3" width="3.4" height="3.4" fill="#fff" stroke="#a2a2aa" stroke-width=".5"/><path d="M1 2h2M2 1v2" stroke="#66666e" stroke-width=".55"/></svg>
<svg class="a" style="left:8.8px;top:304.3px" width="7" height="7" viewBox="0 0 7 7"><path d="M.5 3l3-1.6 3 .8-2.8 1.9z" fill="#d6dae2" stroke="#5e6472" stroke-width=".4"/><path d="M.5 3v1.5l3.2 1.2 2.8-2V2.2L3.7 4.1z" fill="#8a909c" stroke="#5e6472" stroke-width=".4"/></svg>
<div class="t" style="left:17.1px;top:308.5px;transform:translateY(-50%);color:#1e1e1e">Local Repository <span class="sm">(lmalbrecht)</span></div>
<svg class="a" style="left:2px;top:313.2px" width="4" height="4" viewBox="0 0 4 4"><rect x=".3" y=".3" width="3.4" height="3.4" fill="#fff" stroke="#a2a2aa" stroke-width=".5"/><path d="M1 2h2M2 1v2" stroke="#66666e" stroke-width=".55"/></svg>
<svg class="a" style="left:8.8px;top:311.6px" width="7" height="7" viewBox="0 0 7 7"><path d="M.5 3l3-1.6 3 .8-2.8 1.9z" fill="#d6dae2" stroke="#5e6472" stroke-width=".4"/><path d="M.5 3v1.5l3.2 1.2 2.8-2V2.2L3.7 4.1z" fill="#8a909c" stroke="#5e6472" stroke-width=".4"/></svg>
<div class="t" style="left:17.1px;top:315.8px;transform:translateY(-50%);color:#1e1e1e">DEMO Overview <span class="sm">(lmalbrecht)</span></div>
<svg class="a" style="left:2px;top:320.5px" width="4" height="4" viewBox="0 0 4 4"><rect x=".3" y=".3" width="3.4" height="3.4" fill="#fff" stroke="#a2a2aa" stroke-width=".5"/><path d="M1 2h2M2 1v2" stroke="#66666e" stroke-width=".55"/></svg>
<svg class="a" style="left:8.8px;top:318.9px" width="7" height="7" viewBox="0 0 7 7"><path d="M.5 3l3-1.6 3 .8-2.8 1.9z" fill="#d6dae2" stroke="#5e6472" stroke-width=".4"/><path d="M.5 3v1.5l3.2 1.2 2.8-2V2.2L3.7 4.1z" fill="#8a909c" stroke="#5e6472" stroke-width=".4"/></svg>
<div class="t" style="left:17.1px;top:323.1px;transform:translateY(-50%);color:#1e1e1e">DEMO Text Analytics <span class="sm">(lmalbrecht)</span></div>
<svg class="a" style="left:2px;top:327.8px" width="4" height="4" viewBox="0 0 4 4"><rect x=".3" y=".3" width="3.4" height="3.4" fill="#fff" stroke="#a2a2aa" stroke-width=".5"/><path d="M1 2h2M2 1v2" stroke="#66666e" stroke-width=".55"/></svg>
<svg class="a" style="left:8.8px;top:326.2px" width="7" height="7" viewBox="0 0 7 7"><path d="M.5 3l3-1.6 3 .8-2.8 1.9z" fill="#d6dae2" stroke="#5e6472" stroke-width=".4"/><path d="M.5 3v1.5l3.2 1.2 2.8-2V2.2L3.7 4.1z" fill="#8a909c" stroke="#5e6472" stroke-width=".4"/></svg>
<div class="t" style="left:17.1px;top:330.4px;transform:translateY(-50%);color:#1e1e1e">DEMO Radoop <span class="sm">(lmalbrecht)</span></div>
<svg class="a" style="left:2px;top:335.1px" width="4" height="4" viewBox="0 0 4 4"><rect x=".3" y=".3" width="3.4" height="3.4" fill="#fff" stroke="#a2a2aa" stroke-width=".5"/><path d="M1 2h2M2 1v2" stroke="#66666e" stroke-width=".55"/></svg>
<svg class="a" style="left:8.8px;top:333.5px" width="7" height="7" viewBox="0 0 7 7"><path d="M.5 3l3-1.6 3 .8-2.8 1.9z" fill="#d6dae2" stroke="#5e6472" stroke-width=".4"/><path d="M.5 3v1.5l3.2 1.2 2.8-2V2.2L3.7 4.1z" fill="#8a909c" stroke="#5e6472" stroke-width=".4"/></svg>
<div class="t" style="left:17.1px;top:337.7px;transform:translateY(-50%);color:#1e1e1e">Template <span class="sm">(lmalbrecht)</span></div>
<svg class="a" style="left:2px;top:342.4px" width="4" height="4" viewBox="0 0 4 4"><rect x=".3" y=".3" width="3.4" height="3.4" fill="#fff" stroke="#a2a2aa" stroke-width=".5"/><path d="M1 2h2M2 1v2" stroke="#66666e" stroke-width=".55"/></svg>
<svg class="a" style="left:8.8px;top:340.8px" width="7" height="7" viewBox="0 0 7 7"><path d="M1 2l2.5-1.3 2.700.6v4L3.7 6.5 1 5.8z" fill="#c9d0dc" stroke="#56627a" stroke-width=".4"/><path d="M3.7 2.3L6.2 1.3v4L3.7 6.5z" fill="#8fa4c4"/><path d="M3.7 2.3v4.2M1 2l2.700.3" stroke="#56627a" stroke-width=".35"/><path d="M1.5 3l1.700.4M1.5 4l1.700.4" stroke="#2c6fc8" stroke-width=".55"/></svg>
<div class="t" style="left:17.1px;top:345px;transform:translateY(-50%);color:#1e1e1e">Berta <span class="sm">(offline – none)</span></div>
<svg class="a" style="left:2px;top:349.7px" width="4" height="4" viewBox="0 0 4 4"><rect x=".3" y=".3" width="3.4" height="3.4" fill="#fff" stroke="#a2a2aa" stroke-width=".5"/><path d="M1 2h2M2 1v2" stroke="#66666e" stroke-width=".55"/></svg>
<svg class="a" style="left:8.8px;top:348.1px" width="7" height="7" viewBox="0 0 7 7"><path d="M.5 3l3-1.6 3 .8-2.8 1.9z" fill="#d6dae2" stroke="#5e6472" stroke-width=".4"/><path d="M.5 3v1.5l3.2 1.2 2.8-2V2.2L3.7 4.1z" fill="#8a909c" stroke="#5e6472" stroke-width=".4"/></svg>
<div class="t" style="left:17.1px;top:352.3px;transform:translateY(-50%);color:#1e1e1e">Private Repository <span class="sm">(lmalbrecht)</span></div>
<svg class="a" style="left:2px;top:357px" width="4" height="4" viewBox="0 0 4 4"><rect x=".3" y=".3" width="3.4" height="3.4" fill="#fff" stroke="#a2a2aa" stroke-width=".5"/><path d="M1 2h2M2 1v2" stroke="#66666e" stroke-width=".55"/></svg>
<svg class="a" style="left:8.8px;top:355.4px" width="7" height="7" viewBox="0 0 7 7"><path d="M.5 3l3-1.6 3 .8-2.8 1.9z" fill="#d6dae2" stroke="#5e6472" stroke-width=".4"/><path d="M.5 3v1.5l3.2 1.2 2.8-2V2.2L3.7 4.1z" fill="#8a909c" stroke="#5e6472" stroke-width=".4"/></svg>
<div class="t" style="left:17.1px;top:359.6px;transform:translateY(-50%);color:#1e1e1e">DEMO Platform <span class="sm">(lmalbrecht)</span></div>
<svg class="a" style="left:2px;top:364.3px" width="4" height="4" viewBox="0 0 4 4"><rect x=".3" y=".3" width="3.4" height="3.4" fill="#fff" stroke="#a2a2aa" stroke-width=".5"/><path d="M1 2h2M2 1v2" stroke="#66666e" stroke-width=".55"/></svg>
<svg class="a" style="left:8.8px;top:362.7px" width="7" height="7" viewBox="0 0 7 7"><path d="M1 2l2.5-1.3 2.700.6v4L3.7 6.5 1 5.8z" fill="#c9d0dc" stroke="#56627a" stroke-width=".4"/><path d="M3.7 2.3L6.2 1.3v4L3.7 6.5z" fill="#8fa4c4"/><path d="M3.7 2.3v4.2M1 2l2.700.3" stroke="#56627a" stroke-width=".35"/><path d="M1.5 3l1.700.4M1.5 4l1.700.4" stroke="#2c6fc8" stroke-width=".55"/></svg>
<div class="t" style="left:17.1px;top:366.9px;transform:translateY(-50%);color:#1e1e1e">Sales Machine <span class="sm">(offline – none)</span></div>
<svg class="a" style="left:2px;top:371.6px" width="4" height="4" viewBox="0 0 4 4"><rect x=".3" y=".3" width="3.4" height="3.4" fill="#fff" stroke="#a2a2aa" stroke-width=".5"/><path d="M1 2h2M2 1v2" stroke="#66666e" stroke-width=".55"/></svg>
<svg class="a" style="left:8.8px;top:370px" width="7" height="7" viewBox="0 0 7 7"><path d="M1.8 5.3a1.6 1.6 0 0 1 .2-3.1A2.2 2.2 0 0 1 6 2.5a1.5 1.5 0 0 1 .1 2.8z" fill="#fff" stroke="#8a96b4" stroke-width=".5"/></svg>
<div class="t" style="left:17.1px;top:374.2px;transform:translateY(-50%);color:#1e1e1e">Cloud Repository <span class="sm">(disconnected – none)</span></div>
<div class="tab sel" style="left:126.7px;top:39.8px;width:51.3px;height:8px"></div>
<div class="tab" style="left:178.7px;top:39.8px;width:32.5px;height:8px"></div>
<svg class="a" style="left:133.2px;top:40.4px" width="7" height="6.4" viewBox="0 0 7 6.4"><path d="M1 5.4c2.400.4 1.2-2.4 2.7-2.7S4.6 1.4 6 .9" stroke="#8a8a92" stroke-width=".7" fill="none"/><circle cx="1" cy="5.4" r=".7" fill="#fff" stroke="#8a8a92" stroke-width=".4"/><circle cx="6" cy=".9" r=".7" fill="#fff" stroke="#8a8a92" stroke-width=".4"/></svg>
<div class="t" style="left:141.3px;top:44.5px;transform:translateY(-50%);color:#222">Process</div>
<svg class="a" style="left:164.1px;top:41.9px" width="4.4" height="4.4" viewBox="0 0 4.4 4.4"><path d="M.5.5L3.9 3.9M3.900.5L.5 3.9" stroke="#bfc8ea" stroke-width=".9"/></svg>
<svg class="a" style="left:180.2px;top:40.8px" width="5.5" height="5.5" viewBox="0 0 5.5 5.5"><rect x=".4" y=".4" width="4.5" height="4.7" fill="#f6f7fa" stroke="#8a90a0" stroke-width=".4"/><path d="M1.3 1.5l1.2 1-1.2 1M3 3.8h1.2" stroke="#666" stroke-width=".4" fill="none"/></svg>
<div class="t" style="left:188px;top:44.5px;transform:translateY(-50%);color:#222">XML</div>
<svg class="a" style="left:201.1px;top:41.9px" width="4.4" height="4.4" viewBox="0 0 4.4 4.4"><path d="M.5.5L3.9 3.9M3.900.5L.5 3.9" stroke="#bfc8ea" stroke-width=".9"/></svg>
<div class="bar" style="left:125.5px;top:47.6px;width:481.5px;height:11.8px;border:0.6px solid #d9dae8;border-bottom:0.5px solid #d4d4e2"></div>
<svg class="a" style="left:127.2px;top:50.4px" width="7.6" height="6.4" viewBox="0 0 7.6 6.4"><path d="M.3 3.2L3.400.4v1.7h3.9v2.2H3.4v1.7z" fill="#98989e"/></svg>
<svg class="a" style="left:137.9px;top:53.7px" width="3.6" height="2.2" viewBox="0 0 3.6 2.2"><path d="M.2.2h3.2L1.8 2z" fill="#666"/></svg>
<svg class="a" style="left:145.2px;top:50.4px" width="7.6" height="6.4" viewBox="0 0 7.6 6.4"><path d="M7.3 3.2L4.200.4v1.7H.3v2.2h3.9v1.7z" fill="#98989e"/></svg>
<svg class="a" style="left:155.6px;top:53.7px" width="3.6" height="2.2" viewBox="0 0 3.6 2.2"><path d="M.2.2h3.2L1.8 2z" fill="#666"/></svg>
<svg class="a" style="left:163px;top:49.8px" width="6.4" height="7.4" viewBox="0 0 6.4 7.4"><path d="M3.200.3L.4 3.4h1.7v3.7h2.2V3.4h1.7z" fill="#98989e"/></svg>
<svg class="a" style="left:177.5px;top:50.6px" width="6" height="6" viewBox="0 0 6 6"><rect x=".4" y=".4" width="5.2" height="5.2" fill="#d9e8f8" stroke="#3f7fcc" stroke-width=".5"/><rect x="1.4" y="2" width="2.8" height="2.6" fill="#4c90dc"/><rect x="2.2" y="1.2" width="2.6" height="2.4" fill="#7fb4ea" stroke="#2f6fc0" stroke-width=".3"/></svg>
<div class="t" style="left:186px;top:55px;transform:translateY(-50%);color:#222">Process</div>
<svg class="a" style="left:208.5px;top:52.3px" width="2.5" height="3" viewBox="0 0 2.5 3"><path d="M.3.2L2.2 1.500.3 2.8z" fill="#333"/></svg>
<svg class="a" style="left:545.4px;top:50.3px" width="7.2" height="7.2" viewBox="0 0 7.2 7.2"><path d="M.8 4.2l2.8-2.8 2 1.7-2.8 2.8z" fill="#8a909c" stroke="#4e5360" stroke-width=".4"/><circle cx="1.7" cy="5" r=".9" fill="#565b68"/></svg>
<svg class="a" style="left:556.1px;top:53.2px" width="3.6" height="2.2" viewBox="0 0 3.6 2.2"><path d="M.2.2h3.2L1.8 2z" fill="#333"/></svg>
<svg class="a" style="left:562.6px;top:50.2px" width="7.2" height="7.2" viewBox="0 0 7.2 7.2"><rect x=".3" y=".3" width="6.6" height="6.6" fill="#c6d9ec"/><path d="M.3 3.6h6.6M3.600.3v6.6" stroke="#f2f6fb" stroke-width=".8"/><rect x="1.4" y="1.4" width="4.4" height="4.4" fill="none" stroke="#e6eef7" stroke-width=".5"/></svg>
<svg class="a" style="left:574px;top:50px" width="7.4" height="7.6" viewBox="0 0 7.4 7.6"><path d="M2.400.3L.3 2.8h1.3v2H.3l2.1 2.5 2.1-2.5H3.2v-2h1.3z" fill="#2f7fd6"/><text x="5.9" y="5.2" font-size="4.2" font-weight="bold" fill="#777" text-anchor="middle" font-family="Liberation Sans,sans-serif">?</text></svg>
<svg class="a" style="left:585.2px;top:50.2px" width="7.2" height="7.2" viewBox="0 0 7.2 7.2"><rect x=".3" y=".3" width="6.6" height="6.6" fill="#c6d9ec"/><rect x="2" y="2" width="3.2" height="3.2" fill="#f4f8fc" stroke="#4a8cd8" stroke-width=".6"/></svg>
<svg class="a" style="left:596.5px;top:50.2px" width="7.6" height="7.2" viewBox="0 0 7.6 7.2"><path d="M1 3.5l2.8-2.3 2.400.7-2.6 2.5z" fill="#b4b8c2" stroke="#60646e" stroke-width=".4"/><path d="M1 3.5v1.3l2.6 1.1 2.6-2.6V1.9L3.6 4.4z" fill="#80848e" stroke="#60646e" stroke-width=".4"/></svg>
<div class="a" style="left:125.5px;top:59.4px;width:481.5px;height:297.8px;border:0.6px solid #c8cbe2;border-top:none;background:#e7eaf3"></div>
<div class="a" id="cv" style="left:135.2px;top:63.2px;width:461px;height:289.9px;background:#fff;box-shadow:inset 0 0 2.2px 0.3px #b8b8b8;border:0.9px solid #a2a2a2"></div>
<div class="t" style="left:140.3px;top:71.6px;transform:translateY(-50%);font-weight:bold;font-size:4.85px;color:#d0d0d6">Main Process</div>
<svg class="a" style="left:0;top:0" width="749" height="487" viewBox="0 0 749 487" fill="none" stroke-width="0.65"><path d="M137.9,88C144.7,88 144.7,88 144.7,87.9C144.7,87.8 144.7,87.8 151.5,87.8" stroke="#b9b2ee"/><path d="M135.5,85.55A2.45,2.45 0 0 1 135.5,90.45Z" fill="#a59ce0" stroke="#6f66a8" stroke-width="0.4"/><path d="M135.5,92.82A2.45,2.45 0 0 1 135.5,97.72Z" fill="#fff" stroke="#8a8a8a" stroke-width="0.4"/><path d="M595.9,85.55A2.45,2.45 0 0 0 595.9,90.45Z" fill="#a59ce0" stroke="#6f66a8" stroke-width="0.4"/><path d="M595.9,92.82A2.45,2.45 0 0 0 595.9,97.72Z" fill="#a59ce0" stroke="#6f66a8" stroke-width="0.4"/><path d="M595.9,100.09A2.45,2.45 0 0 0 595.9,104.99Z" fill="#cfc796" stroke="#8e885c" stroke-width="0.4"/><path d="M595.9,107.36A2.45,2.45 0 0 0 595.9,112.26Z" fill="#a59ce0" stroke="#6f66a8" stroke-width="0.4"/><path d="M595.9,114.63A2.45,2.45 0 0 0 595.9,119.53Z" fill="#a59ce0" stroke="#6f66a8" stroke-width="0.4"/><path d="M595.9,121.9A2.45,2.45 0 0 0 595.9,126.8Z" fill="#a59ce0" stroke="#6f66a8" stroke-width="0.4"/><path d="M595.9,129.17A2.45,2.45 0 0 0 595.9,134.07Z" fill="#fff" stroke="#8a8a8a" stroke-width="0.4"/></svg>
<div class="t" style="left:129.3px;top:88.7px;transform:translateY(-50%);font-size:3.3px;color:#444;font-weight:bold">inp</div>
<div class="t" style="left:129.3px;top:95.97px;transform:translateY(-50%);font-size:3.3px;color:#444;font-weight:bold">inp</div>
<div class="t" style="left:598.4px;top:88.7px;transform:translateY(-50%);font-size:3.3px;color:#444;font-weight:bold">res</div>
<div class="t" style="left:598.4px;top:95.97px;transform:translateY(-50%);font-size:3.3px;color:#444;font-weight:bold">res</div>
<div class="t" style="left:598.4px;top:103.24px;transform:translateY(-50%);font-size:3.3px;color:#444;font-weight:bold">res</div>
<div class="t" style="left:598.4px;top:110.51px;transform:translateY(-50%);font-size:3.3px;color:#444;font-weight:bold">res</div>
<div class="t" style="left:598.4px;top:117.78px;transform:translateY(-50%);font-size:3.3px;color:#444;font-weight:bold">res</div>
<div class="t" style="left:598.4px;top:125.05px;transform:translateY(-50%);font-size:3.3px;color:#444;font-weight:bold">res</div>
<div class="t" style="left:598.4px;top:132.32px;transform:translateY(-50%);font-size:3.3px;color:#444;font-weight:bold">res</div>
<svg class="a" style="left:0;top:0" width="749" height="487" viewBox="0 0 749 487"><path d="M153.9,85.35A2.45,2.45 0 0 0 153.9,90.25Z" fill="#a59ce0" stroke="#6f66a8" stroke-width="0.4"/><path d="M153.9,92.62A2.45,2.45 0 0 0 153.9,97.52Z" fill="#fff" stroke="#8a8a8a" stroke-width="0.4"/><path d="M191.1,85.35A2.45,2.45 0 0 1 191.1,90.25Z" fill="#a59ce0" stroke="#6f66a8" stroke-width="0.4"/><path d="M191.1,92.62A2.45,2.45 0 0 1 191.1,97.52Z" fill="#fff" stroke="#8a8a8a" stroke-width="0.4"/></svg>
<div class="op" style="left:153.9px;top:75.8px;height:31.3px;width:37.2px"><div class="h">Preprocess</div>
<div class="pl" style="left:1.4px;top:9.7px">in</div>
<div class="pl" style="left:1.4px;top:16.97px">in</div>
<div class="pl" style="right:1.1px;top:9.7px">out</div>
<div class="pl" style="right:1.1px;top:16.97px">out</div>
<svg class="a" style="left:13.1px;top:11.25px" width="10" height="10" viewBox="0 0 10 10"><rect x=".4" y=".4" width="9.2" height="9.2" fill="#f2f8fe" stroke="#86b8ee" stroke-width=".45"/><rect x="3.1" y="1.7" width="5.5" height="4.6" rx=".5" fill="#5a9ee8" stroke="#2f6ec0" stroke-width=".4"/><rect x="3.1" y="1.7" width="5.5" height="1" fill="#3f80d4"/><rect x="1.5" y="3.5" width="5.5" height="4.7" rx=".5" fill="#a2d2f8" stroke="#2f6ec0" stroke-width=".4"/><rect x="1.5" y="3.5" width="5.5" height="1" fill="#4a8ede"/><rect x="2.3" y="5.2" width="3.9" height="2.3" fill="#c6e4fc"/></svg>
<svg class="a" style="left:0.8px;top:23.2px" width="14" height="6.2" viewBox="0 0 14 6.2"><circle cx="2.7" cy="3.1" r="2.15" fill="#d8362a" stroke="#9a2016" stroke-width=".35"/><circle cx="2.7" cy="3.1" r=".8" fill="#e8786e"/><path d="M9.5 .3l3.4 5.5H6.1z" fill="#f8e030" stroke="#c0a214" stroke-width=".4" stroke-linejoin="round"/><path d="M9.5 2.2v1.9M9.5 4.6v.6" stroke="#333" stroke-width=".6"/></svg>
<svg class="a" style="right:0.6px;top:22.6px" width="7" height="7" viewBox="0 0 6 6"><rect x=".3" y=".3" width="5.4" height="5.4" fill="#e6f1fc" stroke="#7aaee8" stroke-width=".4"/><rect x="2" y="1" width="3.2" height="2.7" rx=".3" fill="#5a9ee8" stroke="#2f6ec0" stroke-width=".3"/><rect x=".9" y="2.2" width="3.3" height="2.8" rx=".3" fill="#a2d2f8" stroke="#2f6ec0" stroke-width=".3"/><rect x=".9" y="2.2" width="3.3" height=".7" fill="#4a8ede"/></svg>
</div>
<svg class="a" style="left:0;top:0" width="749" height="487" viewBox="0 0 749 487" fill="none" stroke-width="0.65"><path d="M193.6,87.8C199.7,87.8 199.7,87.8 199.7,87.8C199.7,87.8 199.7,87.8 205.8,87.8" stroke="#b9b2ee"/></svg>
<svg class="a" style="left:0;top:0" width="749" height="487" viewBox="0 0 749 487"><path d="M208.23,85.35A2.45,2.45 0 0 0 208.23,90.25Z" fill="#a59ce0" stroke="#6f66a8" stroke-width="0.4"/><path d="M245.43,85.35A2.45,2.45 0 0 1 245.43,90.25Z" fill="#a59ce0" stroke="#6f66a8" stroke-width="0.4"/><path d="M245.43,92.62A2.45,2.45 0 0 1 245.43,97.52Z" fill="#a59ce0" stroke="#6f66a8" stroke-width="0.4"/></svg>
<div class="op pk" style="left:208.23px;top:75.8px;height:31.3px;width:37.2px"><div class="h">Rename (4)</div>
<div class="pl" style="left:1.4px;top:9.7px">exa</div>
<div class="pl" style="right:1.1px;top:9.7px">exa</div>
<div class="pl" style="right:1.1px;top:16.97px">ori</div>
<svg class="a" style="left:13.1px;top:11.25px" width="10" height="10" viewBox="0 0 10 10"><rect x=".5" y=".5" width="8" height="9" fill="#fff" stroke="#5a90d8" stroke-width=".5"/><path d="M3.200.5v9M5.800.5v9M.5 2.8h8M.5 5h8M.5 7.2h8" stroke="#5a90d8" stroke-width=".4"/><rect x="3.2" y=".5" width="2.6" height="9" fill="#6aa8ec" opacity=".75"/><path d="M5 8.8l.5-1.8 3-3 1.2 1.2-3 3z" fill="#f0b030" stroke="#8a5a10" stroke-width=".4"/></svg>
<svg class="a" style="left:0.8px;top:23.2px" width="6" height="6.2" viewBox="0 0 6 6.2"><circle cx="2.7" cy="3.1" r="2.05" fill="#f8d624" stroke="#c09c14" stroke-width=".4"/><circle cx="2.7" cy="3.1" r=".8" fill="#fbe97a"/></svg>
</div>
<svg class="a" style="left:0;top:0" width="749" height="487" viewBox="0 0 749 487" fill="none" stroke-width="0.65"><path d="M247.9,87.8C252.4,87.8 252.4,106 199.7,106C147,106 147,124.3 151.5,124.3" stroke="#b9b2ee"/></svg>
<svg class="a" style="left:0;top:0" width="749" height="487" viewBox="0 0 749 487"><path d="M153.9,121.82A2.45,2.45 0 0 0 153.9,126.72Z" fill="#a59ce0" stroke="#6f66a8" stroke-width="0.4"/><path d="M153.9,129.09A2.45,2.45 0 0 0 153.9,133.99Z" fill="#fff" stroke="#8a8a8a" stroke-width="0.4"/><path d="M191.1,121.82A2.45,2.45 0 0 1 191.1,126.72Z" fill="#a59ce0" stroke="#6f66a8" stroke-width="0.4"/><path d="M191.1,129.09A2.45,2.45 0 0 1 191.1,133.99Z" fill="#a59ce0" stroke="#6f66a8" stroke-width="0.4"/><path d="M191.1,136.36A2.45,2.45 0 0 1 191.1,141.26Z" fill="#fff" stroke="#8a8a8a" stroke-width="0.4"/></svg>
<div class="op" style="left:153.9px;top:112.27px;height:38.57px;width:37.2px"><div class="h">Split</div>
<div class="pl" style="left:1.4px;top:9.7px">in</div>
<div class="pl" style="left:1.4px;top:16.97px">in</div>
<div class="pl" style="right:1.1px;top:9.7px">out</div>
<div class="pl" style="right:1.1px;top:16.97px">out</div>
<div class="pl" style="right:1.1px;top:24.24px">out</div>
<svg class="a" style="left:13.1px;top:14.89px" width="10" height="10" viewBox="0 0 10 10"><rect x=".4" y=".4" width="9.2" height="9.2" fill="#f2f8fe" stroke="#86b8ee" stroke-width=".45"/><rect x="3.1" y="1.7" width="5.5" height="4.6" rx=".5" fill="#5a9ee8" stroke="#2f6ec0" stroke-width=".4"/><rect x="3.1" y="1.7" width="5.5" height="1" fill="#3f80d4"/><rect x="1.5" y="3.5" width="5.5" height="4.7" rx=".5" fill="#a2d2f8" stroke="#2f6ec0" stroke-width=".4"/><rect x="1.5" y="3.5" width="5.5" height="1" fill="#4a8ede"/><rect x="2.3" y="5.2" width="3.9" height="2.3" fill="#c6e4fc"/></svg>
<svg class="a" style="left:0.8px;top:30.47px" width="6" height="6.2" viewBox="0 0 6 6.2"><circle cx="2.7" cy="3.1" r="2.05" fill="#f8d624" stroke="#c09c14" stroke-width=".4"/><circle cx="2.7" cy="3.1" r=".8" fill="#fbe97a"/></svg>
<svg class="a" style="right:0.6px;top:29.87px" width="7" height="7" viewBox="0 0 6 6"><rect x=".3" y=".3" width="5.4" height="5.4" fill="#e6f1fc" stroke="#7aaee8" stroke-width=".4"/><rect x="2" y="1" width="3.2" height="2.7" rx=".3" fill="#5a9ee8" stroke="#2f6ec0" stroke-width=".3"/><rect x=".9" y="2.2" width="3.3" height="2.8" rx=".3" fill="#a2d2f8" stroke="#2f6ec0" stroke-width=".3"/><rect x=".9" y="2.2" width="3.3" height=".7" fill="#4a8ede"/></svg>
</div>
<svg class="a" style="left:0;top:0" width="749" height="487" viewBox="0 0 749 487" fill="none" stroke-width="0.65"><path d="M193.6,124.3C199.7,124.3 199.7,124.3 199.7,124.3C199.7,124.3 199.7,124.3 205.8,124.3" stroke="#b9b2ee"/><path d="M193.6,131.5C240.4,131.5 240.4,131.5 240.4,191.7C240.4,251.9 240.4,251.9 287.3,251.9" stroke="#b9b2ee"/></svg>
<svg class="a" style="left:0;top:0" width="749" height="487" viewBox="0 0 749 487"><path d="M208.23,121.82A2.45,2.45 0 0 0 208.23,126.72Z" fill="#a59ce0" stroke="#6f66a8" stroke-width="0.4"/><path d="M245.43,121.82A2.45,2.45 0 0 1 245.43,126.72Z" fill="#a59ce0" stroke="#6f66a8" stroke-width="0.4"/><path d="M245.43,129.09A2.45,2.45 0 0 1 245.43,133.99Z" fill="#a59ce0" stroke="#6f66a8" stroke-width="0.4"/><path d="M245.43,136.36A2.45,2.45 0 0 1 245.43,141.26Z" fill="#a59ce0" stroke="#6f66a8" stroke-width="0.4"/><path d="M245.43,143.63A2.45,2.45 0 0 1 245.43,148.53Z" fill="#a59ce0" stroke="#6f66a8" stroke-width="0.4"/></svg>
<div class="op" style="left:208.23px;top:112.27px;height:45.84px;width:37.2px"><div class="h">Multiply (3)</div>
<div class="pl" style="left:1.4px;top:9.7px">inp</div>
<div class="pl" style="right:1.1px;top:9.7px">out</div>
<div class="pl" style="right:1.1px;top:16.97px">out</div>
<div class="pl" style="right:1.1px;top:24.24px">out</div>
<div class="pl" style="right:1.1px;top:31.51px">out</div>
<svg class="a" style="left:13.6px;top:18.27px" width="9" height="10.5" viewBox="0 0 9 10.5"><path d="M1 3l3.5-2 3.5 1.2v6L4.5 10 1 8.8z" fill="#b8c0cc" stroke="#6c7686" stroke-width=".4"/><path d="M4.5 4.2V10M1 3l3.5 1.2L8 2.2" stroke="#6c7686" stroke-width=".4" fill="none"/><path d="M4.5 4.2L8 2.2v6L4.5 10z" fill="#8a94a4"/><path d="M2.2 3.8v5.6M3.3 4v5.7" stroke="#e4e8f0" stroke-width=".5"/></svg>
<svg class="a" style="left:0.8px;top:37.74px" width="6" height="6.2" viewBox="0 0 6 6.2"><circle cx="2.7" cy="3.1" r="2.05" fill="#f8d624" stroke="#c09c14" stroke-width=".4"/><circle cx="2.7" cy="3.1" r=".8" fill="#fbe97a"/></svg>
</div>
<svg class="a" style="left:0;top:0" width="749" height="487" viewBox="0 0 749 487" fill="none" stroke-width="0.65"><path d="M247.9,124.3C267.6,124.3 267.6,124.3 267.6,106C267.6,87.8 267.6,87.8 287.3,87.8" stroke="#b9b2ee"/><path d="M247.9,131.5C267.6,131.5 267.6,131.5 267.6,136.9C267.6,142.3 267.6,142.3 287.3,142.3" stroke="#b9b2ee"/><path d="M247.9,138.8C267.6,138.8 267.6,138.8 267.6,168C267.6,197.2 267.6,197.2 287.3,197.2" stroke="#b9b2ee"/></svg>
<svg class="a" style="left:0;top:0" width="749" height="487" viewBox="0 0 749 487"><path d="M289.73,85.35A2.45,2.45 0 0 0 289.73,90.25Z" fill="#a59ce0" stroke="#6f66a8" stroke-width="0.4"/><path d="M289.73,92.62A2.45,2.45 0 0 0 289.73,97.52Z" fill="#fff" stroke="#8a8a8a" stroke-width="0.4"/><path d="M326.93,85.35A2.45,2.45 0 0 1 326.93,90.25Z" fill="#a59ce0" stroke="#6f66a8" stroke-width="0.4"/><path d="M326.93,92.62A2.45,2.45 0 0 1 326.93,97.52Z" fill="#fff" stroke="#8a8a8a" stroke-width="0.4"/></svg>
<div class="op" style="left:289.73px;top:75.8px;height:31.3px;width:37.2px"><div class="h">Compute Wei...</div>
<div class="pl" style="left:1.4px;top:9.7px">in</div>
<div class="pl" style="left:1.4px;top:16.97px">in</div>
<div class="pl" style="right:1.1px;top:9.7px">out</div>
<div class="pl" style="right:1.1px;top:16.97px">out</div>
<svg class="a" style="left:13.1px;top:11.25px" width="10" height="10" viewBox="0 0 10 10"><rect x=".4" y=".4" width="9.2" height="9.2" fill="#f2f8fe" stroke="#86b8ee" stroke-width=".45"/><rect x="3.1" y="1.7" width="5.5" height="4.6" rx=".5" fill="#5a9ee8" stroke="#2f6ec0" stroke-width=".4"/><rect x="3.1" y="1.7" width="5.5" height="1" fill="#3f80d4"/><rect x="1.5" y="3.5" width="5.5" height="4.7" rx=".5" fill="#a2d2f8" stroke="#2f6ec0" stroke-width=".4"/><rect x="1.5" y="3.5" width="5.5" height="1" fill="#4a8ede"/><rect x="2.3" y="5.2" width="3.9" height="2.3" fill="#c6e4fc"/></svg>
<svg class="a" style="left:0.8px;top:23.2px" width="14" height="6.2" viewBox="0 0 14 6.2"><circle cx="2.7" cy="3.1" r="2.15" fill="#d8362a" stroke="#9a2016" stroke-width=".35"/><circle cx="2.7" cy="3.1" r=".8" fill="#e8786e"/><path d="M9.5 .3l3.4 5.5H6.1z" fill="#f8e030" stroke="#c0a214" stroke-width=".4" stroke-linejoin="round"/><path d="M9.5 2.2v1.9M9.5 4.6v.6" stroke="#333" stroke-width=".6"/></svg>
<svg class="a" style="right:0.6px;top:22.6px" width="7" height="7" viewBox="0 0 6 6"><rect x=".3" y=".3" width="5.4" height="5.4" fill="#e6f1fc" stroke="#7aaee8" stroke-width=".4"/><rect x="2" y="1" width="3.2" height="2.7" rx=".3" fill="#5a9ee8" stroke="#2f6ec0" stroke-width=".3"/><rect x=".9" y="2.2" width="3.3" height="2.8" rx=".3" fill="#a2d2f8" stroke="#2f6ec0" stroke-width=".3"/><rect x=".9" y="2.2" width="3.3" height=".7" fill="#4a8ede"/></svg>
</div>
<svg class="a" style="left:0;top:0" width="749" height="487" viewBox="0 0 749 487" fill="none" stroke-width="0.65"><path d="M329.4,87.8C461.4,87.8 461.4,87.8 461.4,87.9C461.4,88 461.4,88 593.4,88" stroke="#b9b2ee"/></svg>
<svg class="a" style="left:0;top:0" width="749" height="487" viewBox="0 0 749 487"><path d="M289.73,139.85A2.45,2.45 0 0 0 289.73,144.75Z" fill="#a59ce0" stroke="#6f66a8" stroke-width="0.4"/><path d="M289.73,147.12A2.45,2.45 0 0 0 289.73,152.02Z" fill="#fff" stroke="#8a8a8a" stroke-width="0.4"/><path d="M326.93,139.85A2.45,2.45 0 0 1 326.93,144.75Z" fill="#cfc796" stroke="#8e885c" stroke-width="0.4"/><path d="M326.93,147.12A2.45,2.45 0 0 1 326.93,152.02Z" fill="#a59ce0" stroke="#6f66a8" stroke-width="0.4"/><path d="M326.93,154.39A2.45,2.45 0 0 1 326.93,159.29Z" fill="#a59ce0" stroke="#6f66a8" stroke-width="0.4"/><path d="M326.93,161.66A2.45,2.45 0 0 1 326.93,166.56Z" fill="#fff" stroke="#8a8a8a" stroke-width="0.4"/></svg>
<div class="op" style="left:289.73px;top:130.3px;height:46.4px;width:37.2px"><div class="h">Evaluate Model</div>
<div class="pl" style="left:1.4px;top:9.7px">in</div>
<div class="pl" style="left:1.4px;top:16.97px">in</div>
<div class="pl" style="right:1.1px;top:9.7px">out</div>
<div class="pl" style="right:1.1px;top:16.97px">out</div>
<div class="pl" style="right:1.1px;top:24.24px">out</div>
<div class="pl" style="right:1.1px;top:31.51px">out</div>
<svg class="a" style="left:13.1px;top:18.8px" width="10" height="10" viewBox="0 0 10 10"><rect x=".4" y=".4" width="9.2" height="9.2" fill="#f2f8fe" stroke="#86b8ee" stroke-width=".45"/><rect x="3.1" y="1.7" width="5.5" height="4.6" rx=".5" fill="#5a9ee8" stroke="#2f6ec0" stroke-width=".4"/><rect x="3.1" y="1.7" width="5.5" height="1" fill="#3f80d4"/><rect x="1.5" y="3.5" width="5.5" height="4.7" rx=".5" fill="#a2d2f8" stroke="#2f6ec0" stroke-width=".4"/><rect x="1.5" y="3.5" width="5.5" height="1" fill="#4a8ede"/><rect x="2.3" y="5.2" width="3.9" height="2.3" fill="#c6e4fc"/></svg>
<svg class="a" style="left:0.8px;top:38.3px" width="14" height="6.2" viewBox="0 0 14 6.2"><circle cx="2.7" cy="3.1" r="2.15" fill="#d8362a" stroke="#9a2016" stroke-width=".35"/><circle cx="2.7" cy="3.1" r=".8" fill="#e8786e"/><path d="M9.5 .3l3.4 5.5H6.1z" fill="#f8e030" stroke="#c0a214" stroke-width=".4" stroke-linejoin="round"/><path d="M9.5 2.2v1.9M9.5 4.6v.6" stroke="#333" stroke-width=".6"/></svg>
<svg class="a" style="right:0.6px;top:37.7px" width="7" height="7" viewBox="0 0 6 6"><rect x=".3" y=".3" width="5.4" height="5.4" fill="#e6f1fc" stroke="#7aaee8" stroke-width=".4"/><rect x="2" y="1" width="3.2" height="2.7" rx=".3" fill="#5a9ee8" stroke="#2f6ec0" stroke-width=".3"/><rect x=".9" y="2.2" width="3.3" height="2.8" rx=".3" fill="#a2d2f8" stroke="#2f6ec0" stroke-width=".3"/><rect x=".9" y="2.2" width="3.3" height=".7" fill="#4a8ede"/></svg>
</div>
<svg class="a" style="left:0;top:0" width="749" height="487" viewBox="0 0 749 487" fill="none" stroke-width="0.65"><path d="M329.4,142.3C335.5,142.3 335.5,142.3 335.5,133.3C335.5,124.3 335.5,124.3 341.6,124.3" stroke="#d8d2a8"/><path d="M329.4,149.6C461.4,149.6 461.4,149.6 461.4,122.4C461.4,95.3 461.4,95.3 593.4,95.3" stroke="#b9b2ee"/><path d="M329.4,156.8C461.4,156.8 461.4,156.8 461.4,133.3C461.4,109.8 461.4,109.8 593.4,109.8" stroke="#b9b2ee"/></svg>
<svg class="a" style="left:0;top:0" width="749" height="487" viewBox="0 0 749 487"><path d="M344.06,121.82A2.45,2.45 0 0 0 344.06,126.72Z" fill="#cfc796" stroke="#8e885c" stroke-width="0.4"/><path d="M344.06,129.09A2.45,2.45 0 0 0 344.06,133.99Z" fill="#fff" stroke="#8a8a8a" stroke-width="0.4"/><path d="M381.26,121.82A2.45,2.45 0 0 1 381.26,126.72Z" fill="#cfc796" stroke="#8e885c" stroke-width="0.4"/><path d="M381.26,129.09A2.45,2.45 0 0 1 381.26,133.99Z" fill="#fff" stroke="#8a8a8a" stroke-width="0.4"/></svg>
<div class="op" style="left:344.06px;top:112.27px;height:31.3px;width:37.2px"><div class="h">Subprocess</div>
<div class="pl" style="left:1.4px;top:9.7px">in</div>
<div class="pl" style="left:1.4px;top:16.97px">in</div>
<div class="pl" style="right:1.1px;top:9.7px">out</div>
<div class="pl" style="right:1.1px;top:16.97px">out</div>
<svg class="a" style="left:13.1px;top:11.25px" width="10" height="10" viewBox="0 0 10 10"><rect x=".4" y=".4" width="9.2" height="9.2" fill="#f2f8fe" stroke="#86b8ee" stroke-width=".45"/><rect x="3.1" y="1.7" width="5.5" height="4.6" rx=".5" fill="#5a9ee8" stroke="#2f6ec0" stroke-width=".4"/><rect x="3.1" y="1.7" width="5.5" height="1" fill="#3f80d4"/><rect x="1.5" y="3.5" width="5.5" height="4.7" rx=".5" fill="#a2d2f8" stroke="#2f6ec0" stroke-width=".4"/><rect x="1.5" y="3.5" width="5.5" height="1" fill="#4a8ede"/><rect x="2.3" y="5.2" width="3.9" height="2.3" fill="#c6e4fc"/></svg>
<svg class="a" style="left:0.8px;top:23.2px" width="6" height="6.2" viewBox="0 0 6 6.2"><circle cx="2.7" cy="3.1" r="2.05" fill="#f8d624" stroke="#c09c14" stroke-width=".4"/><circle cx="2.7" cy="3.1" r=".8" fill="#fbe97a"/></svg>
<svg class="a" style="right:0.6px;top:22.6px" width="7" height="7" viewBox="0 0 6 6"><rect x=".3" y=".3" width="5.4" height="5.4" fill="#e6f1fc" stroke="#7aaee8" stroke-width=".4"/><rect x="2" y="1" width="3.2" height="2.7" rx=".3" fill="#5a9ee8" stroke="#2f6ec0" stroke-width=".3"/><rect x=".9" y="2.2" width="3.3" height="2.8" rx=".3" fill="#a2d2f8" stroke="#2f6ec0" stroke-width=".3"/><rect x=".9" y="2.2" width="3.3" height=".7" fill="#4a8ede"/></svg>
</div>
<svg class="a" style="left:0;top:0" width="749" height="487" viewBox="0 0 749 487" fill="none" stroke-width="0.65"><path d="M383.7,124.3C488.6,124.3 488.6,124.3 488.6,113.4C488.6,102.5 488.6,102.5 593.4,102.5" stroke="#d8d2a8"/></svg>
<svg class="a" style="left:0;top:0" width="749" height="487" viewBox="0 0 749 487"><path d="M289.73,194.76A2.45,2.45 0 0 0 289.73,199.66Z" fill="#a59ce0" stroke="#6f66a8" stroke-width="0.4"/><path d="M289.73,202.03A2.45,2.45 0 0 0 289.73,206.93Z" fill="#fff" stroke="#8a8a8a" stroke-width="0.4"/><path d="M326.93,194.76A2.45,2.45 0 0 1 326.93,199.66Z" fill="#90cc90" stroke="#5a8e5a" stroke-width="0.4"/><path d="M326.93,202.03A2.45,2.45 0 0 1 326.93,206.93Z" fill="#fff" stroke="#8a8a8a" stroke-width="0.4"/></svg>
<div class="op" style="left:289.73px;top:185.21px;height:31.3px;width:37.2px"><div class="h">Train Model</div>
<div class="pl" style="left:1.4px;top:9.7px">in</div>
<div class="pl" style="left:1.4px;top:16.97px">in</div>
<div class="pl" style="right:1.1px;top:9.7px">out</div>
<div class="pl" style="right:1.1px;top:16.97px">out</div>
<svg class="a" style="left:13.1px;top:11.25px" width="10" height="10" viewBox="0 0 10 10"><rect x=".4" y=".4" width="9.2" height="9.2" fill="#f2f8fe" stroke="#86b8ee" stroke-width=".45"/><rect x="3.1" y="1.7" width="5.5" height="4.6" rx=".5" fill="#5a9ee8" stroke="#2f6ec0" stroke-width=".4"/><rect x="3.1" y="1.7" width="5.5" height="1" fill="#3f80d4"/><rect x="1.5" y="3.5" width="5.5" height="4.7" rx=".5" fill="#a2d2f8" stroke="#2f6ec0" stroke-width=".4"/><rect x="1.5" y="3.5" width="5.5" height="1" fill="#4a8ede"/><rect x="2.3" y="5.2" width="3.9" height="2.3" fill="#c6e4fc"/></svg>
<svg class="a" style="left:0.8px;top:23.2px" width="6" height="6.2" viewBox="0 0 6 6.2"><circle cx="2.7" cy="3.1" r="2.05" fill="#f8d624" stroke="#c09c14" stroke-width=".4"/><circle cx="2.7" cy="3.1" r=".8" fill="#fbe97a"/></svg>
<svg class="a" style="right:0.6px;top:22.6px" width="7" height="7" viewBox="0 0 6 6"><rect x=".3" y=".3" width="5.4" height="5.4" fill="#e6f1fc" stroke="#7aaee8" stroke-width=".4"/><rect x="2" y="1" width="3.2" height="2.7" rx=".3" fill="#5a9ee8" stroke="#2f6ec0" stroke-width=".3"/><rect x=".9" y="2.2" width="3.3" height="2.8" rx=".3" fill="#a2d2f8" stroke="#2f6ec0" stroke-width=".3"/><rect x=".9" y="2.2" width="3.3" height=".7" fill="#4a8ede"/></svg>
</div>
<svg class="a" style="left:0;top:0" width="749" height="487" viewBox="0 0 749 487" fill="none" stroke-width="0.65"><path d="M329.4,197.2C333.9,197.2 333.9,228.2 308.3,228.2C282.8,228.2 282.8,259.2 287.3,259.2" stroke="#8fcf8f"/></svg>
<svg class="a" style="left:0;top:0" width="749" height="487" viewBox="0 0 749 487"><path d="M289.73,249.47A2.45,2.45 0 0 0 289.73,254.37Z" fill="#a59ce0" stroke="#6f66a8" stroke-width="0.4"/><path d="M289.73,256.74A2.45,2.45 0 0 0 289.73,261.64Z" fill="#90cc90" stroke="#5a8e5a" stroke-width="0.4"/><path d="M289.73,264.01A2.45,2.45 0 0 0 289.73,268.91Z" fill="#fff" stroke="#8a8a8a" stroke-width="0.4"/><path d="M326.93,249.47A2.45,2.45 0 0 1 326.93,254.37Z" fill="#a59ce0" stroke="#6f66a8" stroke-width="0.4"/><path d="M326.93,256.74A2.45,2.45 0 0 1 326.93,261.64Z" fill="#fff" stroke="#8a8a8a" stroke-width="0.4"/></svg>
<div class="op" style="left:289.73px;top:239.92px;height:38.57px;width:37.2px"><div class="h">Apply Model</div>
<div class="pl" style="left:1.4px;top:9.7px">in</div>
<div class="pl" style="left:1.4px;top:16.97px">in</div>
<div class="pl" style="left:1.4px;top:24.24px">in</div>
<div class="pl" style="right:1.1px;top:9.7px">out</div>
<div class="pl" style="right:1.1px;top:16.97px">out</div>
<svg class="a" style="left:13.1px;top:14.89px" width="10" height="10" viewBox="0 0 10 10"><rect x=".4" y=".4" width="9.2" height="9.2" fill="#f2f8fe" stroke="#86b8ee" stroke-width=".45"/><rect x="3.1" y="1.7" width="5.5" height="4.6" rx=".5" fill="#5a9ee8" stroke="#2f6ec0" stroke-width=".4"/><rect x="3.1" y="1.7" width="5.5" height="1" fill="#3f80d4"/><rect x="1.5" y="3.5" width="5.5" height="4.7" rx=".5" fill="#a2d2f8" stroke="#2f6ec0" stroke-width=".4"/><rect x="1.5" y="3.5" width="5.5" height="1" fill="#4a8ede"/><rect x="2.3" y="5.2" width="3.9" height="2.3" fill="#c6e4fc"/></svg>
<svg class="a" style="left:0.8px;top:30.47px" width="6" height="6.2" viewBox="0 0 6 6.2"><circle cx="2.7" cy="3.1" r="2.05" fill="#f8d624" stroke="#c09c14" stroke-width=".4"/><circle cx="2.7" cy="3.1" r=".8" fill="#fbe97a"/></svg>
<svg class="a" style="right:0.6px;top:29.87px" width="7" height="7" viewBox="0 0 6 6"><rect x=".3" y=".3" width="5.4" height="5.4" fill="#e6f1fc" stroke="#7aaee8" stroke-width=".4"/><rect x="2" y="1" width="3.2" height="2.7" rx=".3" fill="#5a9ee8" stroke="#2f6ec0" stroke-width=".3"/><rect x=".9" y="2.2" width="3.3" height="2.8" rx=".3" fill="#a2d2f8" stroke="#2f6ec0" stroke-width=".3"/><rect x=".9" y="2.2" width="3.3" height=".7" fill="#4a8ede"/></svg>
</div>
<svg class="a" style="left:0;top:0" width="749" height="487" viewBox="0 0 749 487" fill="none" stroke-width="0.65"><path d="M329.4,251.9C335.5,251.9 335.5,251.9 335.5,251.9C335.5,251.9 335.5,251.9 341.6,251.9" stroke="#b9b2ee"/></svg>
<svg class="a" style="left:0;top:0" width="749" height="487" viewBox="0 0 749 487"><path d="M344.06,249.47A2.45,2.45 0 0 0 344.06,254.37Z" fill="#a59ce0" stroke="#6f66a8" stroke-width="0.4"/><path d="M381.26,249.47A2.45,2.45 0 0 1 381.26,254.37Z" fill="#a59ce0" stroke="#6f66a8" stroke-width="0.4"/><path d="M381.26,256.74A2.45,2.45 0 0 1 381.26,261.64Z" fill="#a59ce0" stroke="#6f66a8" stroke-width="0.4"/><path d="M381.26,264.01A2.45,2.45 0 0 1 381.26,268.91Z" fill="#a59ce0" stroke="#6f66a8" stroke-width="0.4"/></svg>
<div class="op" style="left:344.06px;top:239.92px;height:38.57px;width:37.2px"><div class="h">Multiply (6)</div>
<div class="pl" style="left:1.4px;top:9.7px">inp</div>
<div class="pl" style="right:1.1px;top:9.7px">out</div>
<div class="pl" style="right:1.1px;top:16.97px">out</div>
<div class="pl" style="right:1.1px;top:24.24px">out</div>
<svg class="a" style="left:13.6px;top:14.64px" width="9" height="10.5" viewBox="0 0 9 10.5"><path d="M1 3l3.5-2 3.5 1.2v6L4.5 10 1 8.8z" fill="#b8c0cc" stroke="#6c7686" stroke-width=".4"/><path d="M4.5 4.2V10M1 3l3.5 1.2L8 2.2" stroke="#6c7686" stroke-width=".4" fill="none"/><path d="M4.5 4.2L8 2.2v6L4.5 10z" fill="#8a94a4"/><path d="M2.2 3.8v5.6M3.3 4v5.7" stroke="#e4e8f0" stroke-width=".5"/></svg>
<svg class="a" style="left:0.8px;top:30.47px" width="6" height="6.2" viewBox="0 0 6 6.2"><circle cx="2.7" cy="3.1" r="2.05" fill="#f8d624" stroke="#c09c14" stroke-width=".4"/><circle cx="2.7" cy="3.1" r=".8" fill="#fbe97a"/></svg>
</div>
<svg class="a" style="left:0;top:0" width="749" height="487" viewBox="0 0 749 487" fill="none" stroke-width="0.65"><path d="M383.7,251.9C389.8,251.9 389.8,251.9 389.8,251.9C389.8,251.9 389.8,251.9 395.9,251.9" stroke="#b9b2ee"/><path d="M383.7,259.2C389.8,259.2 389.8,259.2 389.8,237.3C389.8,215.4 389.8,215.4 395.9,215.4" stroke="#b9b2ee"/></svg>
<svg class="a" style="left:0;top:0" width="749" height="487" viewBox="0 0 749 487"><path d="M398.38,212.99A2.45,2.45 0 0 0 398.38,217.89Z" fill="#a59ce0" stroke="#6f66a8" stroke-width="0.4"/><path d="M398.38,220.26A2.45,2.45 0 0 0 398.38,225.16Z" fill="#fff" stroke="#8a8a8a" stroke-width="0.4"/><path d="M435.58,212.99A2.45,2.45 0 0 1 435.58,217.89Z" fill="#a59ce0" stroke="#6f66a8" stroke-width="0.4"/><path d="M435.58,220.26A2.45,2.45 0 0 1 435.58,225.16Z" fill="#fff" stroke="#8a8a8a" stroke-width="0.4"/></svg>
<div class="op" style="left:398.38px;top:203.44px;height:31.3px;width:37.2px"><div class="h">Aggregate Risk</div>
<div class="pl" style="left:1.4px;top:9.7px">in</div>
<div class="pl" style="left:1.4px;top:16.97px">in</div>
<div class="pl" style="right:1.1px;top:9.7px">out</div>
<div class="pl" style="right:1.1px;top:16.97px">out</div>
<svg class="a" style="left:13.1px;top:11.25px" width="10" height="10" viewBox="0 0 10 10"><rect x=".4" y=".4" width="9.2" height="9.2" fill="#f2f8fe" stroke="#86b8ee" stroke-width=".45"/><rect x="3.1" y="1.7" width="5.5" height="4.6" rx=".5" fill="#5a9ee8" stroke="#2f6ec0" stroke-width=".4"/><rect x="3.1" y="1.7" width="5.5" height="1" fill="#3f80d4"/><rect x="1.5" y="3.5" width="5.5" height="4.7" rx=".5" fill="#a2d2f8" stroke="#2f6ec0" stroke-width=".4"/><rect x="1.5" y="3.5" width="5.5" height="1" fill="#4a8ede"/><rect x="2.3" y="5.2" width="3.9" height="2.3" fill="#c6e4fc"/></svg>
<svg class="a" style="left:0.8px;top:23.2px" width="6" height="6.2" viewBox="0 0 6 6.2"><circle cx="2.7" cy="3.1" r="2.05" fill="#f8d624" stroke="#c09c14" stroke-width=".4"/><circle cx="2.7" cy="3.1" r=".8" fill="#fbe97a"/></svg>
<svg class="a" style="right:0.6px;top:22.6px" width="7" height="7" viewBox="0 0 6 6"><rect x=".3" y=".3" width="5.4" height="5.4" fill="#e6f1fc" stroke="#7aaee8" stroke-width=".4"/><rect x="2" y="1" width="3.2" height="2.7" rx=".3" fill="#5a9ee8" stroke="#2f6ec0" stroke-width=".3"/><rect x=".9" y="2.2" width="3.3" height="2.8" rx=".3" fill="#a2d2f8" stroke="#2f6ec0" stroke-width=".3"/><rect x=".9" y="2.2" width="3.3" height=".7" fill="#4a8ede"/></svg>
</div>
<svg class="a" style="left:0;top:0" width="749" height="487" viewBox="0 0 749 487" fill="none" stroke-width="0.65"><path d="M438,215.4C515.7,215.4 515.7,215.4 515.7,169.9C515.7,124.3 515.7,124.3 593.4,124.3" stroke="#b9b2ee"/></svg>
<svg class="a" style="left:0;top:0" width="749" height="487" viewBox="0 0 749 487"><path d="M398.38,249.47A2.45,2.45 0 0 0 398.38,254.37Z" fill="#a59ce0" stroke="#6f66a8" stroke-width="0.4"/><path d="M435.58,249.47A2.45,2.45 0 0 1 435.58,254.37Z" fill="#a59ce0" stroke="#6f66a8" stroke-width="0.4"/><path d="M435.58,256.74A2.45,2.45 0 0 1 435.58,261.64Z" fill="#a59ce0" stroke="#6f66a8" stroke-width="0.4"/></svg>
<div class="op pk" style="left:398.38px;top:239.92px;height:31.3px;width:37.2px"><div class="h">Select Attribu...</div>
<div class="pl" style="left:1.4px;top:9.7px">exa</div>
<div class="pl" style="right:1.1px;top:9.7px">exa</div>
<div class="pl" style="right:1.1px;top:16.97px">ori</div>
<svg class="a" style="left:13.1px;top:11.25px" width="10" height="10" viewBox="0 0 10 10"><rect x=".5" y=".5" width="8" height="9" fill="#fff" stroke="#5a90d8" stroke-width=".5"/><path d="M3.200.5v9M5.800.5v9M.5 2.8h8M.5 5h8M.5 7.2h8" stroke="#5a90d8" stroke-width=".4"/><rect x="3.2" y=".5" width="2.6" height="9" fill="#6aa8ec" opacity=".75"/><path d="M5.5 5.5l4 4M9.5 5.5l-4 4" stroke="#d81818" stroke-width="1.3"/></svg>
<svg class="a" style="left:0.8px;top:23.2px" width="6" height="6.2" viewBox="0 0 6 6.2"><circle cx="2.7" cy="3.1" r="2.05" fill="#f8d624" stroke="#c09c14" stroke-width=".4"/><circle cx="2.7" cy="3.1" r=".8" fill="#fbe97a"/></svg>
</div>
<svg class="a" style="left:0;top:0" width="749" height="487" viewBox="0 0 749 487" fill="none" stroke-width="0.65"><path d="M438,251.9C444.1,251.9 444.1,251.9 444.1,251.9C444.1,251.9 444.1,251.9 450.3,251.9" stroke="#b9b2ee"/></svg>
<svg class="a" style="left:0;top:0" width="749" height="487" viewBox="0 0 749 487"><path d="M452.72,249.47A2.45,2.45 0 0 0 452.72,254.37Z" fill="#a59ce0" stroke="#6f66a8" stroke-width="0.4"/><path d="M489.92,249.47A2.45,2.45 0 0 1 489.92,254.37Z" fill="#a59ce0" stroke="#6f66a8" stroke-width="0.4"/><path d="M489.92,256.74A2.45,2.45 0 0 1 489.92,261.64Z" fill="#a59ce0" stroke="#6f66a8" stroke-width="0.4"/></svg>
<div class="op pk" style="left:452.72px;top:239.92px;height:31.3px;width:37.2px"><div class="h">Rename (7)</div>
<div class="pl" style="left:1.4px;top:9.7px">exa</div>
<div class="pl" style="right:1.1px;top:9.7px">exa</div>
<div class="pl" style="right:1.1px;top:16.97px">ori</div>
<svg class="a" style="left:13.1px;top:11.25px" width="10" height="10" viewBox="0 0 10 10"><rect x=".5" y=".5" width="8" height="9" fill="#fff" stroke="#5a90d8" stroke-width=".5"/><path d="M3.200.5v9M5.800.5v9M.5 2.8h8M.5 5h8M.5 7.2h8" stroke="#5a90d8" stroke-width=".4"/><rect x="3.2" y=".5" width="2.6" height="9" fill="#6aa8ec" opacity=".75"/><path d="M5 8.8l.5-1.8 3-3 1.2 1.2-3 3z" fill="#f0b030" stroke="#8a5a10" stroke-width=".4"/></svg>
<svg class="a" style="left:0.8px;top:23.2px" width="6" height="6.2" viewBox="0 0 6 6.2"><circle cx="2.7" cy="3.1" r="2.05" fill="#f8d624" stroke="#c09c14" stroke-width=".4"/><circle cx="2.7" cy="3.1" r=".8" fill="#fbe97a"/></svg>
</div>
<svg class="a" style="left:0;top:0" width="749" height="487" viewBox="0 0 749 487" fill="none" stroke-width="0.65"><path d="M492.4,251.9C542.9,251.9 542.9,251.9 542.9,184.5C542.9,117.1 542.9,117.1 593.4,117.1" stroke="#b9b2ee"/></svg>
<div class="tab" style="left:130px;top:360.6px;width:45.3px;height:8px"></div>
<div class="tab" style="left:180px;top:360.6px;width:30.5px;height:8px"></div>
<div class="tab sel" style="left:212.7px;top:360.6px;width:96.3px;height:8px"></div>
<div class="tab" style="left:310.4px;top:360.6px;width:73.1px;height:8px"></div>
<div class="tab" style="left:386px;top:360.6px;width:50.4px;height:8px"></div>
<svg class="a" style="left:133.5px;top:361.8px" width="6" height="5.5" viewBox="0 0 6 5.5"><path d="M3 .4l2.7 4.6H.3z" fill="#f8dc28" stroke="#b89a10" stroke-width=".4"/><path d="M3 1.9v1.6M3 4v.4" stroke="#333" stroke-width=".5"/></svg>
<div class="t" style="left:142px;top:365.5px;transform:translateY(-50%);">Problems</div>
<svg class="a" style="left:167.8px;top:362.9px" width="4.4" height="4.4" viewBox="0 0 4.4 4.4"><path d="M.5.5L3.9 3.9M3.900.5L.5 3.9" stroke="#bfc8ea" stroke-width=".9"/></svg>
<svg class="a" style="left:184px;top:361.8px" width="5" height="5.8" viewBox="0 0 5 5.8"><path d="M.4 1.4L1.600.4h3v5H.4z" fill="#f4f5f8" stroke="#8a90a0" stroke-width=".4"/><path d="M1.3 2.5h2.4M1.3 3.6h2.4" stroke="#999" stroke-width=".3"/></svg>
<div class="t" style="left:190.7px;top:365.5px;transform:translateY(-50%);">Log</div>
<svg class="a" style="left:204.1px;top:362.9px" width="4.4" height="4.4" viewBox="0 0 4.4 4.4"><path d="M.5.5L3.9 3.9M3.900.5L.5 3.9" stroke="#bfc8ea" stroke-width=".9"/></svg>
<svg class="a" style="left:218.5px;top:361.3px" width="7" height="6.5" viewBox="0 0 7 6.5"><path d="M1 2l2.5-1.3 2.700.6v4L3.7 6.5 1 5.8z" fill="#c9d0dc" stroke="#56627a" stroke-width=".4"/><path d="M3.7 2.3L6.2 1.3v4L3.7 6.5z" fill="#8fa4c4"/><path d="M3.7 2.3v4.2M1 2l2.700.3" stroke="#56627a" stroke-width=".35"/><path d="M1.5 3l1.700.4M1.5 4l1.700.4" stroke="#2c6fc8" stroke-width=".55"/></svg>
<div class="t" style="left:227px;top:365.5px;transform:translateY(-50%);font-weight:bold;font-size:4.6px;color:#333">RapidMiner Server Processes</div>
<svg class="a" style="left:297.3px;top:362.9px" width="4.4" height="4.4" viewBox="0 0 4.4 4.4"><path d="M.5.5L3.9 3.9M3.900.5L.5 3.9" stroke="#bfc8ea" stroke-width=".9"/></svg>
<svg class="a" style="left:312.8px;top:361.5px" width="7" height="6.5" viewBox="0 0 7 6.5"><path d="M1.8 5.3a1.6 1.6 0 0 1 .2-3.1A2.2 2.2 0 0 1 6 2.5a1.5 1.5 0 0 1 .1 2.8z" fill="#fff" stroke="#8a96b4" stroke-width=".5"/></svg>
<div class="t" style="left:321px;top:365.5px;transform:translateY(-50%);">Cloud Process Monitor</div>
<svg class="a" style="left:375.5px;top:362.9px" width="4.4" height="4.4" viewBox="0 0 4.4 4.4"><path d="M.5.5L3.9 3.9M3.900.5L.5 3.9" stroke="#bfc8ea" stroke-width=".9"/></svg>
<svg class="a" style="left:390.3px;top:361.8px" width="6.5" height="5.5" viewBox="0 0 6.5 5.5"><path d="M1.5 4a1.5 1.5 0 0 1 .3-2.8A2 2 0 0 1 5.5 1.6 1.3 1.3 0 0 1 5.4 4z" fill="#dcecfb" stroke="#5a9ae0" stroke-width=".5"/><path d="M3.2 2.5L2.4 4h1l-.6 1.4" stroke="#e8a020" stroke-width=".5" fill="none"/></svg>
<div class="t" style="left:398.9px;top:365.5px;transform:translateY(-50%);">Storm View</div>
<svg class="a" style="left:427.8px;top:362.9px" width="4.4" height="4.4" viewBox="0 0 4.4 4.4"><path d="M.5.5L3.9 3.9M3.900.5L.5 3.9" stroke="#bfc8ea" stroke-width=".9"/></svg>
<div class="bar" style="left:125.5px;top:368.4px;width:481.5px;height:12.4px;border:0.6px solid #d9dae8;border-bottom:0.5px solid #d4d4e2"></div>
<svg class="a" style="left:127.7px;top:371px" width="7" height="7" viewBox="0 0 7 7"><path d="M1 2l2.5-1.3 2.700.6v4L3.7 6.5 1 5.8z" fill="#c9d0dc" stroke="#56627a" stroke-width=".4"/><path d="M3.7 2.3L6.2 1.3v4L3.7 6.5z" fill="#8fa4c4"/><path d="M3.7 2.3v4.2M1 2l2.700.3" stroke="#56627a" stroke-width=".35"/><path d="M1.5 3l1.700.4M1.5 4l1.700.4" stroke="#2c6fc8" stroke-width=".55"/><path d="M3.5 5h2.7M5 3.8L6.4 5 5 6.2" stroke="#30a830" stroke-width=".9" fill="none"/></svg>
<div class="t" style="left:141px;top:375.5px;transform:translateY(-50%);"><u>F</u>ilter</div>
<div class="a" style="left:151.7px;top:369.4px;width:31.3px;height:10.8px;border:0.7px solid #8d8d99;border-radius:1.5px;background:#fff"></div>
<div class="t" style="left:153.8px;top:375.5px;transform:translateY(-50%);">Session</div>
<svg class="a" style="left:176.1px;top:373.9px" width="3.6" height="2.2" viewBox="0 0 3.6 2.2"><path d="M.2.2h3.2L1.8 2z" fill="#222"/></svg>
<div class="pane" style="left:125.5px;top:380.8px;width:481.5px;height:96.5px;border-top:none"></div>
<svg class="a" style="left:126.3px;top:382.3px" width="4" height="4" viewBox="0 0 4 4"><rect x=".3" y=".3" width="3.4" height="3.4" fill="#fff" stroke="#a2a2aa" stroke-width=".5"/><path d="M1 2h2M2 1v2" stroke="#66666e" stroke-width=".55"/></svg>
<svg class="a" style="left:132.8px;top:380.7px" width="7" height="7" viewBox="0 0 7 7"><path d="M1 2l2.5-1.3 2.700.6v4L3.7 6.5 1 5.8z" fill="#c9d0dc" stroke="#56627a" stroke-width=".4"/><path d="M3.7 2.3L6.2 1.3v4L3.7 6.5z" fill="#8fa4c4"/><path d="M3.7 2.3v4.2M1 2l2.700.3" stroke="#56627a" stroke-width=".35"/><path d="M1.5 3l1.700.4M1.5 4l1.700.4" stroke="#2c6fc8" stroke-width=".55"/></svg>
<div class="t" style="left:142px;top:384.9px;transform:translateY(-50%);color:#1e1e1e">Berta</div>
<svg class="a" style="left:126.3px;top:388.7px" width="4" height="4" viewBox="0 0 4 4"><rect x=".3" y=".3" width="3.4" height="3.4" fill="#fff" stroke="#a2a2aa" stroke-width=".5"/><path d="M1 2h2M2 1v2" stroke="#66666e" stroke-width=".55"/></svg>
<svg class="a" style="left:132.8px;top:387.1px" width="7" height="7" viewBox="0 0 7 7"><path d="M1 2l2.5-1.3 2.700.6v4L3.7 6.5 1 5.8z" fill="#c9d0dc" stroke="#56627a" stroke-width=".4"/><path d="M3.7 2.3L6.2 1.3v4L3.7 6.5z" fill="#8fa4c4"/><path d="M3.7 2.3v4.2M1 2l2.700.3" stroke="#56627a" stroke-width=".35"/><path d="M1.5 3l1.700.4M1.5 4l1.700.4" stroke="#2c6fc8" stroke-width=".55"/></svg>
<div class="t" style="left:142px;top:391.3px;transform:translateY(-50%);color:#1e1e1e">Sales Machine</div>
<div class="tab" style="left:612.3px;top:40.4px;width:72.3px;height:7px"></div>
<div class="tab" style="left:686px;top:40.4px;width:58.7px;height:7px"></div>
<svg class="a" style="left:627.5px;top:40.9px" width="6" height="6" viewBox="0 0 6 6"><rect x=".4" y=".4" width="4.5" height="5" fill="#eef2f8" stroke="#5a7cb4" stroke-width=".4"/><path d="M1.2 1.6h2.8M1.2 2.8h2.8M1.2 4h1.5" stroke="#5a7cb4" stroke-width=".4"/><path d="M3 5.2l.4-1.3 1.8-1.800.9.900-1.8 1.8z" fill="#f0b030" stroke="#8a5a10" stroke-width=".3"/></svg>
<div class="t" style="left:634.5px;top:44.7px;transform:translateY(-50%);font-size:5.1px">Parameters</div>
<svg class="a" style="left:665.6px;top:42.1px" width="4.4" height="4.4" viewBox="0 0 4.4 4.4"><path d="M.5.5L3.9 3.9M3.900.5L.5 3.9" stroke="#bfc8ea" stroke-width=".9"/></svg>
<svg class="a" style="left:698px;top:40.9px" width="6.2" height="6.2" viewBox="0 0 6.2 6.2"><circle cx="3.1" cy="3.1" r="2.7" fill="#3f86d8" stroke="#8e98ac" stroke-width=".6"/><path d="M3.1 .6a2.5 2.5 0 0 1 0 5z" fill="#e8ecf2"/></svg>
<div class="t" style="left:706.5px;top:44.7px;transform:translateY(-50%);font-size:5.1px">Context</div>
<svg class="a" style="left:727.1px;top:42.1px" width="4.4" height="4.4" viewBox="0 0 4.4 4.4"><path d="M.5.5L3.9 3.9M3.900.5L.5 3.9" stroke="#bfc8ea" stroke-width=".9"/></svg>
<div class="tab sel" style="left:609px;top:47.8px;width:141px;height:7.4px;border-radius:3px 0 0 0"></div>
<svg class="a" style="left:648.5px;top:48.4px" width="6" height="6.3" viewBox="0 0 6 6.3"><rect x="1.4" y="1.2" width="4" height="4.7" fill="#f6f7fa" stroke="#7c8494" stroke-width=".4"/><rect x=".4" y=".4" width="3.2" height="3.8" fill="#fff" stroke="#7c8494" stroke-width=".4"/></svg>
<div class="t" style="left:656.7px;top:52.3px;transform:translateY(-50%);font-size:5.05px">Dashboard Objects</div>
<svg class="a" style="left:704.1px;top:49.1px" width="4.4" height="4.4" viewBox="0 0 4.4 4.4"><path d="M.5.5L3.9 3.9M3.900.5L.5 3.9" stroke="#bfc8ea" stroke-width=".9"/></svg>
<div class="bar" style="left:608.8px;top:55.2px;width:141px;height:12.6px;border:0.6px solid #d9dae8;border-bottom:0.5px solid #d4d4e2"></div>
<svg class="a" style="left:610.5px;top:58.5px" width="6.5" height="5.5" viewBox="0 0 6.5 5.5"><path d="M.5 3.3L3.300.6l2.6 1.4L3.1 4.8z" fill="#4a78c0" stroke="#2c4a80" stroke-width=".4"/><path d="M.5 3.3l1.2-1.1 2.6 1.5-1.2 1.1z" fill="#f0d070"/></svg>
<div class="a" style="left:608.8px;top:67.8px;width:141px;height:10.2px;background:linear-gradient(#f5f5f9,#ececf2);border-left:0.6px solid #d9dae8;border-bottom:0.5px solid #d4d4e2"></div>
<div class="t" style="left:624.6px;top:73.4px;transform:translateY(-50%);font-style:italic;color:#222">Object Type</div>
<div class="t" style="left:677.4px;top:73.4px;transform:translateY(-50%);font-style:italic;color:#222">Name</div>
<div class="a" style="left:608.8px;top:78px;width:141px;height:235.5px;background:#f0f0f5;border-left:0.6px solid #d9dae8;border-bottom:0.6px solid #d9dae8"></div>
<div class="tab sel" style="left:608.8px;top:318.2px;width:41.4px;height:8px"></div>
<div class="tab" style="left:651.8px;top:318.2px;width:47.5px;height:8px"></div>
<svg class="a" style="left:616.5px;top:319.2px" width="6" height="6" viewBox="0 0 6 6"><circle cx="3" cy="3" r="2.7" fill="#3f78cc" stroke="#2a4f90" stroke-width=".4"/><text x="3" y="4.6" font-size="4.5" font-weight="bold" fill="#fff" text-anchor="middle" font-family="Liberation Sans,sans-serif">?</text></svg>
<div class="t" style="left:624.8px;top:323.1px;transform:translateY(-50%);font-size:4.9px">Help</div>
<svg class="a" style="left:639.1px;top:320.5px" width="4.4" height="4.4" viewBox="0 0 4.4 4.4"><path d="M.5.5L3.9 3.9M3.900.5L.5 3.9" stroke="#bfc8ea" stroke-width=".9"/></svg>
<svg class="a" style="left:656px;top:319.2px" width="5" height="6" viewBox="0 0 5 6"><path d="M.4 .4h3l1.2 1.2v4H.4z" fill="#f4f5f8" stroke="#9a9eac" stroke-width=".4"/><path d="M1.2 2.5h2.4M1.2 3.6h2.4M1.2 4.6h1.6" stroke="#aaa" stroke-width=".3"/></svg>
<div class="t" style="left:662.5px;top:323.1px;transform:translateY(-50%);font-size:4.9px">Comment</div>
<svg class="a" style="left:689.6px;top:320.5px" width="4.4" height="4.4" viewBox="0 0 4.4 4.4"><path d="M.5.5L3.9 3.9M3.900.5L.5 3.9" stroke="#bfc8ea" stroke-width=".9"/></svg>
<div class="pane" style="left:608.5px;top:326.2px;width:134px;height:151.1px"></div>
<svg class="a" style="left:610.4px;top:332.3px" width="10.2" height="10" viewBox="0 0 8 8"><rect x=".4" y=".4" width="7.2" height="7.2" fill="#e4f0fc" stroke="#7aaee6" stroke-width=".4"/><rect x="1.2" y="2.9" width="4.6" height="3.7" rx=".4" fill="#4a90dc" stroke="#2a62ac" stroke-width=".35"/><rect x="2.4" y="1.5" width="4.6" height="3.7" rx=".4" fill="#9ccaf4" stroke="#2a62ac" stroke-width=".35"/><rect x="2.4" y="1.5" width="4.6" height=".9" fill="#3a7ccc"/></svg>
<div class="t" style="left:622.6px;top:340px;transform:translateY(-50%);font-family:'Liberation Serif',serif;font-weight:bold;font-size:7.2px;color:#111">Process</div>
<div class="a" style="left:610.8px;top:347.1px;width:128.4px;height:1.5px;background:linear-gradient(#222,#777)"></div>
<div class="t" style="left:610.8px;top:358.7px;transform:translateY(-50%);font-family:'Liberation Serif',serif;font-weight:bold;font-size:5.35px;color:#2f98f0">Synopsis</div>
<div class="t" style="left:621px;top:375.2px;transform:translateY(-50%);font-size:5.8px;color:#222">The root operator which is the outer most</div>
<div class="t" style="left:621px;top:382.15px;transform:translateY(-50%);font-size:5.8px;color:#222">operator of every process.</div>
<div class="t" style="left:610.8px;top:402.1px;transform:translateY(-50%);font-family:'Liberation Serif',serif;font-weight:bold;font-size:5.35px;color:#2f98f0">Description</div>
<div class="t" style="left:621px;top:418.6px;transform:translateY(-50%);font-size:5.8px;color:#222">Each process must contain exactly one</div>
<div class="t" style="left:621px;top:425.55px;transform:translateY(-50%);font-size:5.8px;color:#222">operator of this class, and it must be the</div>
<div class="t" style="left:621px;top:432.5px;transform:translateY(-50%);font-size:5.8px;color:#222">root operator of the process. This</div>
<div class="t" style="left:621px;top:439.45px;transform:translateY(-50%);font-size:5.8px;color:#222">operator provides a set of parameters</div>
<div class="t" style="left:621px;top:446.4px;transform:translateY(-50%);font-size:5.8px;color:#222">that are of global relevance to the</div>
<div class="t" style="left:621px;top:453.35px;transform:translateY(-50%);font-size:5.8px;color:#222">process like logging and initialization of</div>
<div class="t" style="left:621px;top:460.3px;transform:translateY(-50%);font-size:5.8px;color:#222">parameters of the random number</div>
<div class="t" style="left:621px;top:467.25px;transform:translateY(-50%);font-size:5.8px;color:#222">generator.</div>
<div class="a" style="left:741.8px;top:326.6px;width:6.7px;height:150.4px;background:#f3f3f9;border-left:0.5px solid #d6d6e6"></div>
<div class="a" style="left:741.8px;top:327px;width:6.6px;height:6px;background:#9ea0ca;border-radius:1px 1px 0 0"></div>
<svg class="a" style="left:743.3px;top:328.7px" width="3.6" height="2.6" viewBox="0 0 3.6 2.6"><path d="M.3 2.3L1.800.4l1.5 1.9z" fill="#fff"/></svg>
<div class="a" style="left:742.8px;top:333.3px;width:4.3px;height:24.4px;background:linear-gradient(90deg,#babcdc,#acaed4)"></div>
<div class="a" style="left:741.8px;top:470.2px;width:6.6px;height:6.3px;background:#9ea0ca;border-radius:0 0 1px 1px"></div>
<svg class="a" style="left:743.3px;top:472.2px" width="3.6" height="2.6" viewBox="0 0 3.6 2.6"><path d="M.3.3L1.8 2.2 3.300.3z" fill="#fff"/></svg>
<div class="a" style="left:0;top:477.6px;width:749px;height:9.4px;background:#eeeef3"></div>
<svg class="a" style="left:2px;top:478.7px" width="6.5" height="6.5" viewBox="0 0 6.5 6.5"><circle cx="3.2" cy="3.2" r="2.7" fill="#7e8490" stroke="#555a66" stroke-width=".5"/><path d="M1.6 2.6a1.8 1.8 0 0 1 3.2 0" stroke="#c8ccd6" stroke-width=".6" fill="none"/></svg>
<div class="a" style="left:688px;top:478.7px;width:60.5px;height:6.8px;border:0.6px solid #b0b0bc;border-radius:1.5px;background:linear-gradient(#f6f6f9,#e8e8ee)"></div>
<div class="a" style="left:717.3px;top:479.6px;width:2px;height:4.6px;background:#ebebf1"></div>
</div></body></html>
